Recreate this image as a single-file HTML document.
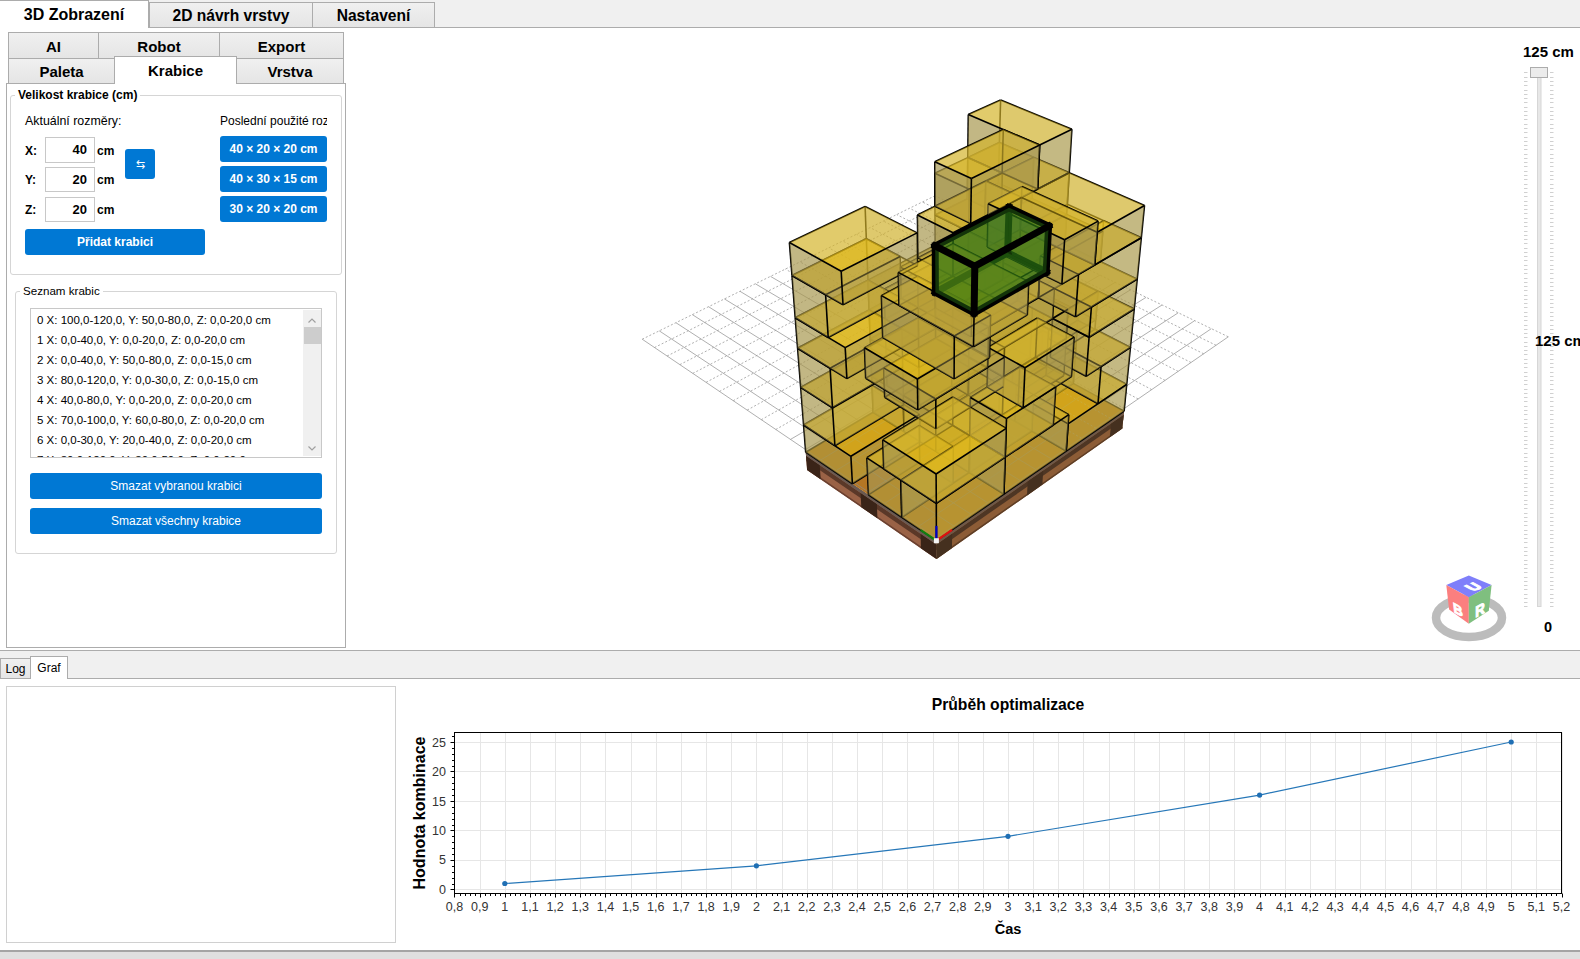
<!DOCTYPE html>
<html><head><meta charset="utf-8">
<style>
*{box-sizing:border-box;margin:0;padding:0}
html,body{width:1580px;height:959px;overflow:hidden;background:#fff;font-family:"Liberation Sans",sans-serif;color:#000}
.a{position:absolute}
.tab{position:absolute;border:1px solid #acacac;background:linear-gradient(#f0f0f0,#e5e5e5);text-align:center;font-weight:bold}
.tsel{background:#fff;border-bottom:none}
.btn{position:absolute;background:#0078d4;color:#fff;border-radius:3px;text-align:center;font-size:12px}
.tb{position:absolute;border:1px solid #c8c8c8;background:#fff;text-align:right;font-size:13px;font-weight:bold;padding-right:7px}
.gb{position:absolute;border:1px solid #d5d5d5;border-radius:3px}
.gt{position:absolute;background:#fff;font-size:12px;padding:0 3px}
.lbl{position:absolute;font-size:12px;white-space:nowrap}
.li{position:absolute;left:37px;font-size:11.5px;white-space:nowrap}
</style></head><body>
<!-- top tab strip -->
<div class="a" style="left:0;top:0;width:1580px;height:28px;background:#f0f0f0;border-bottom:1px solid #acacac"></div>
<div class="tab tsel" style="left:-1px;top:0;width:150px;height:28px;font-size:16px;line-height:28px">3D Zobrazení</div>
<div class="tab" style="left:149px;top:2px;width:164px;height:26px;font-size:15.6px;line-height:25px">2D návrh vrstvy</div>
<div class="tab" style="left:312px;top:2px;width:123px;height:26px;font-size:15.6px;line-height:25px">Nastavení</div>

<!-- left panel -->
<div class="a" style="left:6px;top:83px;width:340px;height:565px;border:1px solid #acacac;background:#fff"></div>
<div class="tab" style="left:8px;top:32px;width:91px;height:27px;font-size:15px;line-height:27px">AI</div>
<div class="tab" style="left:98px;top:32px;width:122px;height:27px;font-size:15px;line-height:27px">Robot</div>
<div class="tab" style="left:219px;top:32px;width:125px;height:27px;font-size:15px;line-height:27px">Export</div>
<div class="tab" style="left:8px;top:58px;width:107px;height:26px;font-size:15px;line-height:26px">Paleta</div>
<div class="tab" style="left:236px;top:58px;width:108px;height:26px;font-size:15px;line-height:26px">Vrstva</div>
<div class="tab tsel" style="left:114px;top:56px;width:123px;height:28px;font-size:15px;line-height:28px">Krabice</div>

<div class="gb" style="left:10px;top:95px;width:332px;height:180px"></div>
<div class="gt" style="left:15px;top:88px;font-weight:bold">Velikost krabice (cm)</div>
<div class="lbl" style="left:25px;top:114px;font-size:12.4px">Aktuální rozměry:</div>
<div class="lbl" style="left:220px;top:114px;width:107px;overflow:hidden">Poslední použité rozměry</div>
<div class="lbl" style="left:25px;top:144px;font-weight:bold">X:</div>
<div class="lbl" style="left:25px;top:173px;font-weight:bold">Y:</div>
<div class="lbl" style="left:25px;top:203px;font-weight:bold">Z:</div>
<div class="tb" style="left:45px;top:137px;width:50px;height:26px;line-height:24px">40</div>
<div class="tb" style="left:45px;top:167px;width:50px;height:25px;line-height:23px">20</div>
<div class="tb" style="left:45px;top:197px;width:50px;height:25px;line-height:23px">20</div>
<div class="lbl" style="left:97px;top:144px;font-weight:bold">cm</div>
<div class="lbl" style="left:97px;top:173px;font-weight:bold">cm</div>
<div class="lbl" style="left:97px;top:203px;font-weight:bold">cm</div>
<div class="btn" style="left:125px;top:149px;width:30px;height:30px;line-height:30px;font-size:11px">⇆</div>
<div class="btn" style="left:220px;top:136px;width:107px;height:26px;line-height:26px;font-weight:bold;overflow:hidden">40 × 20 × 20 cm</div>
<div class="btn" style="left:220px;top:166px;width:107px;height:26px;line-height:26px;font-weight:bold;overflow:hidden">40 × 30 × 15 cm</div>
<div class="btn" style="left:220px;top:196px;width:107px;height:26px;line-height:26px;font-weight:bold;overflow:hidden">30 × 20 × 20 cm</div>
<div class="btn" style="left:25px;top:229px;width:180px;height:26px;line-height:26px;font-weight:bold">Přidat krabici</div>

<div class="gb" style="left:15px;top:291px;width:322px;height:263px"></div>
<div class="gt" style="left:20px;top:284px;font-size:11.6px">Seznam krabic</div>
<div class="a" style="left:30px;top:308px;width:292px;height:150px;border:1px solid #c8c8c8;overflow:hidden">
  <div class="li" style="left:6px;top:5px">0 X: 100,0-120,0, Y: 50,0-80,0, Z: 0,0-20,0 cm</div>
  <div class="li" style="left:6px;top:25px">1 X: 0,0-40,0, Y: 0,0-20,0, Z: 0,0-20,0 cm</div>
  <div class="li" style="left:6px;top:45px">2 X: 0,0-40,0, Y: 50,0-80,0, Z: 0,0-15,0 cm</div>
  <div class="li" style="left:6px;top:65px">3 X: 80,0-120,0, Y: 0,0-30,0, Z: 0,0-15,0 cm</div>
  <div class="li" style="left:6px;top:85px">4 X: 40,0-80,0, Y: 0,0-20,0, Z: 0,0-20,0 cm</div>
  <div class="li" style="left:6px;top:105px">5 X: 70,0-100,0, Y: 60,0-80,0, Z: 0,0-20,0 cm</div>
  <div class="li" style="left:6px;top:125px">6 X: 0,0-30,0, Y: 20,0-40,0, Z: 0,0-20,0 cm</div>
  <div class="li" style="left:6px;top:145px">7 X: 80,0-120,0, Y: 30,0-50,0, Z: 0,0-20,0 cm</div>
  <div class="a" style="left:272px;top:1px;width:18px;height:146px;background:#f0f0f0"></div>
  <div class="a" style="left:273px;top:18px;width:17px;height:17px;background:#cdcdcd"></div>
  <svg class="a" style="left:272px;top:1px" width="18" height="147"><path d="M5.5 12.5l3.5-3.5 3.5 3.5M5.5 136.5l3.5 3.5 3.5-3.5" fill="none" stroke="#a0a0a0" stroke-width="1.2"/></svg>
</div>
<div class="btn" style="left:30px;top:473px;width:292px;height:26px;line-height:26px">Smazat vybranou krabici</div>
<div class="btn" style="left:30px;top:508px;width:292px;height:26px;line-height:26px">Smazat všechny krabice</div>

<!-- 3D view placeholder -->
<svg class="a" style="left:0;top:0" width="1580" height="959">
<polygon points="936.5,558.9 807.1,469.9 805.7,452.2 936.4,540.7" fill="#9a6246"/>
<polygon points="936.5,549.9 806.4,461.1 806.0,455.8 936.4,544.4" fill="#5a3828"/>
<polygon points="936.5,558.9 807.1,469.9 807.0,468.1 936.5,557.1" fill="#6a4030"/>
<polygon points="936.5,558.9 1122.3,428.6 1124.1,411.1 936.4,540.7" fill="#8c5c36"/>
<polygon points="936.5,549.9 1123.2,419.9 1123.7,414.7 936.4,544.4" fill="#4e3624"/>
<polygon points="936.5,558.9 1122.3,428.6 1122.5,426.8 936.5,557.1" fill="#5e3e26"/>
<polygon points="936.5,558.9 920.9,548.2 920.7,533.7 936.4,544.4" fill="#3a2418"/>
<polygon points="877.4,518.3 861.3,507.2 860.6,492.9 876.9,503.9" fill="#3a2418"/>
<polygon points="820.7,479.2 807.1,469.9 806.0,455.8 819.7,465.1" fill="#3a2418"/>
<polygon points="936.5,558.9 952.0,548.0 952.1,533.6 936.4,544.4" fill="#45301f"/>
<polygon points="1027.0,495.4 1042.4,484.6 1043.2,470.4 1027.7,481.2" fill="#45301f"/>
<polygon points="1109.8,437.3 1122.3,428.6 1123.7,414.7 1111.1,423.4" fill="#45301f"/>
<polygon points="936.4,544.4 806.0,455.8 805.7,452.2 936.4,540.7" fill="#6a5a52"/>
<polygon points="936.4,544.4 1123.7,414.7 1124.1,411.1 936.4,540.7" fill="#6e5848"/>
<polygon points="936.4,540.7 1124.1,411.1 994.1,340.3 805.7,452.2" fill="#b47624"/>
<path d="M936.4 538.0L642.2 339.2M936.4 538.0L1228.3 336.8M953.8 526.0L659.2 330.8M918.9 526.2L1211.3 328.7M970.9 514.2L675.9 322.7M901.7 514.6L1194.6 320.7M987.6 502.7L692.3 314.6M884.9 503.2L1178.2 312.8M1004.0 491.4L708.5 306.7M868.4 492.0L1162.0 305.0M1020.0 480.4L724.4 298.9M852.2 481.1L1146.1 297.3M1035.8 469.5L740.0 291.3M836.4 470.4L1130.5 289.8M1051.3 458.8L755.4 283.8M820.8 459.9L1115.1 282.4M1066.4 448.4L770.5 276.4M805.5 449.5L1099.9 275.1M790.5 439.4L1085.0 268.0" stroke="#8c8c8c" stroke-width="0.7" fill="none"/>
<path d="M1081.3 438.1L785.4 269.1M1095.9 428.1L800.1 261.9M775.8 429.5L1070.3 260.9M1110.3 418.2L814.5 254.8M761.3 419.7L1055.9 253.9M1124.3 408.5L828.8 247.9M747.2 410.1L1041.6 247.1M1138.2 399.0L842.8 241.0M733.2 400.7L1027.6 240.3M1151.7 389.6L856.5 234.3M719.5 391.4L1013.8 233.7M1165.1 380.4L870.1 227.6M706.1 382.3L1000.2 227.2M1178.2 371.4L883.5 221.1M692.8 373.4L986.7 220.7M1191.0 362.5L896.7 214.6M679.9 364.6L973.5 214.4M1203.7 353.8L909.6 208.3M667.1 356.0L960.5 208.1M1216.1 345.3L922.4 202.0M654.5 347.5L947.7 201.9M1228.3 336.8L935.0 195.8M642.2 339.2L935.0 195.8" stroke="#9a9a9a" stroke-width="0.8" stroke-dasharray="2 2" fill="none"/>
<line x1="994.1" y1="340.3" x2="995.1" y2="305.6" stroke="#000" stroke-width="1.6"/>
<line x1="965.4" y1="357.4" x2="994.1" y2="340.3" stroke="#000" stroke-width="1.6"/>
<line x1="1040.8" y1="365.7" x2="994.1" y2="340.3" stroke="#000" stroke-width="1.6"/>
<polygon points="965.4,357.4 994.1,340.3 995.1,305.6 965.9,322.4" fill="#b09e4c" fill-opacity="0.45"/>
<polygon points="1040.8,365.7 994.1,340.3 995.1,305.6 1042.6,330.6" fill="#a39552" fill-opacity="0.45"/>
<polygon points="1012.2,383.7 1040.8,365.7 994.1,340.3 965.4,357.4" fill="#c9a514" fill-opacity="0.45"/>
<line x1="1010.6" y1="313.8" x2="995.1" y2="305.6" stroke="#000" stroke-width="1.6"/>
<line x1="995.1" y1="305.6" x2="996.0" y2="269.6" stroke="#000" stroke-width="1.6"/>
<line x1="965.9" y1="322.4" x2="995.1" y2="305.6" stroke="#000" stroke-width="1.6"/>
<line x1="996.3" y1="374.8" x2="965.4" y2="357.4" stroke="#000" stroke-width="1.6"/>
<line x1="965.4" y1="357.4" x2="965.9" y2="322.4" stroke="#000" stroke-width="1.6"/>
<line x1="965.4" y1="357.4" x2="965.9" y2="322.4" stroke="#000" stroke-width="1.6"/>
<polygon points="1010.6,313.8 995.1,305.6 996.0,269.6 1011.9,277.6" fill="#a39552" fill-opacity="0.45"/>
<line x1="1042.6" y1="330.6" x2="995.1" y2="305.6" stroke="#000" stroke-width="1.6"/>
<line x1="1012.2" y1="383.7" x2="965.4" y2="357.4" stroke="#000" stroke-width="1.6"/>
<line x1="920.5" y1="384.1" x2="965.4" y2="357.4" stroke="#000" stroke-width="1.6"/>
<line x1="1073.2" y1="383.4" x2="1040.8" y2="365.7" stroke="#000" stroke-width="1.6"/>
<line x1="1040.8" y1="365.7" x2="1042.6" y2="330.6" stroke="#000" stroke-width="1.6"/>
<line x1="1040.8" y1="365.7" x2="1042.6" y2="330.6" stroke="#000" stroke-width="1.6"/>
<line x1="1042.6" y1="330.6" x2="1010.6" y2="313.8" stroke="#000" stroke-width="1.6"/>
<line x1="1010.6" y1="313.8" x2="1011.9" y2="277.6" stroke="#000" stroke-width="1.6"/>
<line x1="1010.6" y1="313.8" x2="1011.9" y2="277.6" stroke="#000" stroke-width="1.6"/>
<line x1="1012.2" y1="383.7" x2="1040.8" y2="365.7" stroke="#000" stroke-width="1.6"/>
<polygon points="996.3,374.8 965.4,357.4 965.9,322.4 997.3,339.5" fill="#a39552" fill-opacity="0.45"/>
<line x1="935.6" y1="339.7" x2="995.1" y2="305.6" stroke="#000" stroke-width="1.6"/>
<line x1="1011.9" y1="277.6" x2="996.0" y2="269.6" stroke="#000" stroke-width="1.6"/>
<line x1="1011.9" y1="277.6" x2="996.0" y2="269.6" stroke="#000" stroke-width="1.6"/>
<polygon points="1013.5,348.2 1042.6,330.6 995.1,305.6 965.9,322.4" fill="#e8c21a" fill-opacity="0.45"/>
<polygon points="1012.2,383.7 965.4,357.4 965.9,322.4 1013.5,348.2" fill="#a39552" fill-opacity="0.45"/>
<polygon points="951.2,348.5 1010.6,313.8 995.1,305.6 935.6,339.7" fill="#c9a514" fill-opacity="0.45"/>
<line x1="1012.2" y1="383.7" x2="996.3" y2="374.8" stroke="#000" stroke-width="1.6"/>
<line x1="996.0" y1="269.6" x2="996.8" y2="241.7" stroke="#000" stroke-width="1.6"/>
<polygon points="951.4,402.4 996.3,374.8 965.4,357.4 920.5,384.1" fill="#c9a514" fill-opacity="0.45"/>
<polygon points="920.5,384.1 965.4,357.4 965.9,322.4 920.1,348.6" fill="#b09e4c" fill-opacity="0.45"/>
<polygon points="1073.2,383.4 1040.8,365.7 1042.6,330.6 1075.7,348.0" fill="#a39552" fill-opacity="0.45"/>
<polygon points="1042.6,330.6 1010.6,313.8 1011.9,277.6 1044.5,294.1" fill="#a39552" fill-opacity="0.45"/>
<polygon points="1012.2,383.7 1040.8,365.7 1042.6,330.6 1013.5,348.2" fill="#b09e4c" fill-opacity="0.45"/>
<polygon points="1011.9,277.6 996.0,269.6 996.8,241.7 1012.9,249.5" fill="#a39552" fill-opacity="0.45"/>
<polygon points="935.6,339.7 995.1,305.6 996.0,269.6 935.4,303.0" fill="#b09e4c" fill-opacity="0.45"/>
<line x1="982.5" y1="402.3" x2="1040.8" y2="365.7" stroke="#000" stroke-width="1.6"/>
<line x1="996.3" y1="374.8" x2="997.3" y2="339.5" stroke="#000" stroke-width="1.6"/>
<line x1="996.3" y1="374.8" x2="997.3" y2="339.5" stroke="#000" stroke-width="1.6"/>
<line x1="966.6" y1="393.0" x2="996.3" y2="374.8" stroke="#000" stroke-width="1.6"/>
<line x1="997.3" y1="339.5" x2="965.9" y2="322.4" stroke="#000" stroke-width="1.6"/>
<line x1="951.2" y1="348.5" x2="1010.6" y2="313.8" stroke="#000" stroke-width="1.6"/>
<line x1="951.2" y1="348.5" x2="1010.6" y2="313.8" stroke="#000" stroke-width="1.6"/>
<line x1="1073.2" y1="383.4" x2="1075.1" y2="357.0" stroke="#000" stroke-width="1.6"/>
<polygon points="1012.2,383.7 996.3,374.8 997.3,339.5 1013.5,348.2" fill="#a39552" fill-opacity="0.45"/>
<polygon points="982.5,402.3 1012.2,383.7 996.3,374.8 966.6,393.0" fill="#c9a514" fill-opacity="0.45"/>
<line x1="1011.9" y1="277.6" x2="1012.9" y2="249.5" stroke="#000" stroke-width="1.6"/>
<line x1="1011.9" y1="277.6" x2="1012.9" y2="249.5" stroke="#000" stroke-width="1.6"/>
<line x1="1013.5" y1="348.2" x2="965.9" y2="322.4" stroke="#000" stroke-width="1.6"/>
<line x1="951.4" y1="402.4" x2="996.3" y2="374.8" stroke="#000" stroke-width="1.6"/>
<line x1="1073.2" y1="383.4" x2="1075.7" y2="348.0" stroke="#000" stroke-width="1.6"/>
<line x1="920.1" y1="348.6" x2="965.9" y2="322.4" stroke="#000" stroke-width="1.6"/>
<line x1="1012.9" y1="249.5" x2="996.8" y2="241.7" stroke="#000" stroke-width="1.6"/>
<line x1="1012.9" y1="249.5" x2="996.8" y2="241.7" stroke="#000" stroke-width="1.6"/>
<line x1="1075.7" y1="348.0" x2="1042.6" y2="330.6" stroke="#000" stroke-width="1.6"/>
<line x1="1075.7" y1="348.0" x2="1042.6" y2="330.6" stroke="#000" stroke-width="1.6"/>
<line x1="1042.6" y1="330.6" x2="1044.5" y2="294.1" stroke="#000" stroke-width="1.6"/>
<line x1="1042.6" y1="330.6" x2="1044.5" y2="294.1" stroke="#000" stroke-width="1.6"/>
<line x1="1044.5" y1="294.1" x2="1011.9" y2="277.6" stroke="#000" stroke-width="1.6"/>
<line x1="1044.5" y1="294.1" x2="1011.9" y2="277.6" stroke="#000" stroke-width="1.6"/>
<polygon points="1015.1,421.3 1073.2,383.4 1040.8,365.7 982.5,402.3" fill="#c9a514" fill-opacity="0.45"/>
<line x1="996.8" y1="241.7" x2="997.5" y2="212.9" stroke="#000" stroke-width="1.6"/>
<line x1="1124.1" y1="411.1" x2="1073.2" y2="383.4" stroke="#000" stroke-width="1.6"/>
<polygon points="982.5,402.3 1040.8,365.7 1042.6,330.6 983.3,366.5" fill="#b09e4c" fill-opacity="0.45"/>
<line x1="1013.5" y1="348.2" x2="1042.6" y2="330.6" stroke="#000" stroke-width="1.6"/>
<line x1="1013.5" y1="348.2" x2="1042.6" y2="330.6" stroke="#000" stroke-width="1.6"/>
<polygon points="983.3,366.5 1042.6,330.6 1010.6,313.8 951.2,348.5" fill="#c9a514" fill-opacity="0.45"/>
<polygon points="951.2,348.5 1010.6,313.8 1011.9,277.6 951.4,311.6" fill="#b09e4c" fill-opacity="0.45"/>
<polygon points="951.2,348.5 1010.6,313.8 1011.9,277.6 951.4,311.6" fill="#b09e4c" fill-opacity="0.45"/>
<line x1="1012.2" y1="383.7" x2="1013.5" y2="348.2" stroke="#000" stroke-width="1.6"/>
<line x1="1012.2" y1="383.7" x2="1013.5" y2="348.2" stroke="#000" stroke-width="1.6"/>
<line x1="935.4" y1="303.0" x2="996.0" y2="269.6" stroke="#000" stroke-width="1.6"/>
<line x1="935.4" y1="303.0" x2="996.0" y2="269.6" stroke="#000" stroke-width="1.6"/>
<polygon points="966.6,393.0 996.3,374.8 997.3,339.5 967.1,357.4" fill="#b09e4c" fill-opacity="0.45"/>
<line x1="982.5" y1="402.3" x2="1012.2" y2="383.7" stroke="#000" stroke-width="1.6"/>
<line x1="951.4" y1="402.4" x2="920.5" y2="384.1" stroke="#000" stroke-width="1.6"/>
<line x1="951.4" y1="402.4" x2="920.5" y2="384.1" stroke="#000" stroke-width="1.6"/>
<line x1="920.5" y1="384.1" x2="920.1" y2="348.6" stroke="#000" stroke-width="1.6"/>
<line x1="920.5" y1="384.1" x2="920.1" y2="348.6" stroke="#000" stroke-width="1.6"/>
<polygon points="1012.9,249.5 996.8,241.7 997.5,212.9 1013.9,220.7" fill="#a39552" fill-opacity="0.45"/>
<polygon points="1044.5,294.1 1011.9,277.6 1012.9,249.5 1046.0,265.8" fill="#a39552" fill-opacity="0.45"/>
<polygon points="951.4,311.6 1011.9,277.6 996.0,269.6 935.4,303.0" fill="#e8c21a" fill-opacity="0.45"/>
<polygon points="951.4,311.6 1011.9,277.6 996.0,269.6 935.4,303.0" fill="#c9a514" fill-opacity="0.45"/>
<line x1="1013.5" y1="348.2" x2="997.3" y2="339.5" stroke="#000" stroke-width="1.6"/>
<polygon points="951.4,402.4 996.3,374.8 997.3,339.5 951.6,366.7" fill="#b09e4c" fill-opacity="0.45"/>
<polygon points="1124.1,411.1 1073.2,383.4 1075.1,357.0 1126.7,384.4" fill="#a39552" fill-opacity="0.45"/>
<polygon points="951.6,366.7 997.3,339.5 965.9,322.4 920.1,348.6" fill="#e8c21a" fill-opacity="0.45"/>
<line x1="873.1" y1="412.2" x2="920.5" y2="384.1" stroke="#000" stroke-width="1.6"/>
<line x1="982.5" y1="402.3" x2="966.6" y2="393.0" stroke="#000" stroke-width="1.6"/>
<polygon points="935.4,303.0 996.0,269.6 996.8,241.7 935.3,274.5" fill="#b09e4c" fill-opacity="0.45"/>
<polygon points="1075.7,348.0 1042.6,330.6 1044.5,294.1 1078.3,311.1" fill="#a39552" fill-opacity="0.45"/>
<line x1="951.2" y1="348.5" x2="935.6" y2="339.7" stroke="#000" stroke-width="1.6"/>
<line x1="951.2" y1="348.5" x2="935.6" y2="339.7" stroke="#000" stroke-width="1.6"/>
<polygon points="1046.7,366.3 1075.7,348.0 1042.6,330.6 1013.5,348.2" fill="#c9a514" fill-opacity="0.45"/>
<line x1="1015.1" y1="421.3" x2="1073.2" y2="383.4" stroke="#000" stroke-width="1.6"/>
<line x1="1015.1" y1="421.3" x2="1073.2" y2="383.4" stroke="#000" stroke-width="1.6"/>
<polygon points="1013.5,348.2 1042.6,330.6 1044.5,294.1 1014.8,311.4" fill="#b09e4c" fill-opacity="0.45"/>
<line x1="1012.9" y1="249.5" x2="1013.9" y2="220.7" stroke="#000" stroke-width="1.6"/>
<line x1="1012.9" y1="249.5" x2="1013.9" y2="220.7" stroke="#000" stroke-width="1.6"/>
<polygon points="982.5,402.3 1012.2,383.7 1013.5,348.2 983.3,366.5" fill="#b09e4c" fill-opacity="0.45"/>
<line x1="1013.9" y1="220.7" x2="997.5" y2="212.9" stroke="#000" stroke-width="1.6"/>
<line x1="983.3" y1="366.5" x2="1042.6" y2="330.6" stroke="#000" stroke-width="1.6"/>
<line x1="983.3" y1="366.5" x2="1042.6" y2="330.6" stroke="#000" stroke-width="1.6"/>
<line x1="951.4" y1="311.6" x2="1011.9" y2="277.6" stroke="#000" stroke-width="1.6"/>
<line x1="951.4" y1="311.6" x2="1011.9" y2="277.6" stroke="#000" stroke-width="1.6"/>
<line x1="951.4" y1="311.6" x2="1011.9" y2="277.6" stroke="#000" stroke-width="1.6"/>
<line x1="951.4" y1="311.6" x2="1011.9" y2="277.6" stroke="#000" stroke-width="1.6"/>
<line x1="998.7" y1="411.7" x2="966.6" y2="393.0" stroke="#000" stroke-width="1.6"/>
<polygon points="951.4,402.4 920.5,384.1 920.1,348.6 951.6,366.7" fill="#a39552" fill-opacity="0.45"/>
<polygon points="951.4,402.4 920.5,384.1 920.1,348.6 951.6,366.7" fill="#a39552" fill-opacity="0.45"/>
<line x1="1075.1" y1="357.0" x2="1077.6" y2="320.5" stroke="#000" stroke-width="1.6"/>
<line x1="967.1" y1="357.4" x2="997.3" y2="339.5" stroke="#000" stroke-width="1.6"/>
<line x1="997.5" y1="212.9" x2="998.3" y2="183.3" stroke="#000" stroke-width="1.6"/>
<line x1="966.6" y1="393.0" x2="967.1" y2="357.4" stroke="#000" stroke-width="1.6"/>
<line x1="966.6" y1="393.0" x2="967.1" y2="357.4" stroke="#000" stroke-width="1.6"/>
<line x1="935.6" y1="339.7" x2="935.4" y2="303.0" stroke="#000" stroke-width="1.6"/>
<line x1="935.6" y1="339.7" x2="935.4" y2="303.0" stroke="#000" stroke-width="1.6"/>
<line x1="1046.0" y1="265.8" x2="1012.9" y2="249.5" stroke="#000" stroke-width="1.6"/>
<line x1="1046.0" y1="265.8" x2="1012.9" y2="249.5" stroke="#000" stroke-width="1.6"/>
<line x1="1046.2" y1="375.3" x2="1075.1" y2="357.0" stroke="#000" stroke-width="1.6"/>
<line x1="935.3" y1="274.5" x2="996.8" y2="241.7" stroke="#000" stroke-width="1.6"/>
<line x1="935.3" y1="274.5" x2="996.8" y2="241.7" stroke="#000" stroke-width="1.6"/>
<line x1="1126.7" y1="384.4" x2="1075.1" y2="357.0" stroke="#000" stroke-width="1.6"/>
<line x1="1126.7" y1="384.4" x2="1075.1" y2="357.0" stroke="#000" stroke-width="1.6"/>
<line x1="1044.5" y1="294.1" x2="1046.0" y2="265.8" stroke="#000" stroke-width="1.6"/>
<line x1="1044.5" y1="294.1" x2="1046.0" y2="265.8" stroke="#000" stroke-width="1.6"/>
<line x1="1029.9" y1="357.2" x2="1013.5" y2="348.2" stroke="#000" stroke-width="1.6"/>
<polygon points="1015.1,421.3 1073.2,383.4 1075.1,357.0 1016.2,394.4" fill="#b09e4c" fill-opacity="0.45"/>
<line x1="1030.6" y1="228.5" x2="997.5" y2="212.9" stroke="#000" stroke-width="1.6"/>
<polygon points="904.0,431.6 951.4,402.4 920.5,384.1 873.1,412.2" fill="#c9a514" fill-opacity="0.45"/>
<polygon points="983.3,366.5 1013.5,348.2 997.3,339.5 967.1,357.4" fill="#e8c21a" fill-opacity="0.45"/>
<polygon points="873.1,412.2 920.5,384.1 920.1,348.6 871.7,376.3" fill="#b09e4c" fill-opacity="0.45"/>
<polygon points="982.5,402.3 966.6,393.0 967.1,357.4 983.3,366.5" fill="#a39552" fill-opacity="0.45"/>
<polygon points="951.2,348.5 935.6,339.7 935.4,303.0 951.4,311.6" fill="#a39552" fill-opacity="0.45"/>
<polygon points="951.2,348.5 935.6,339.7 935.4,303.0 951.4,311.6" fill="#a39552" fill-opacity="0.45"/>
<line x1="1075.7" y1="348.0" x2="1078.3" y2="311.1" stroke="#000" stroke-width="1.6"/>
<polygon points="951.4,311.6 1011.9,277.6 1012.9,249.5 951.5,283.0" fill="#b09e4c" fill-opacity="0.45"/>
<polygon points="951.4,311.6 1011.9,277.6 1012.9,249.5 951.5,283.0" fill="#b09e4c" fill-opacity="0.45"/>
<line x1="951.6" y1="366.7" x2="997.3" y2="339.5" stroke="#000" stroke-width="1.6"/>
<line x1="1078.3" y1="311.1" x2="1044.5" y2="294.1" stroke="#000" stroke-width="1.6"/>
<polygon points="1015.1,421.3 1073.2,383.4 1075.7,348.0 1016.5,385.2" fill="#b09e4c" fill-opacity="0.45"/>
<line x1="1046.7" y1="366.3" x2="1075.7" y2="348.0" stroke="#000" stroke-width="1.6"/>
<polygon points="1046.0,265.8 1012.9,249.5 1013.9,220.7 1047.5,236.6" fill="#a39552" fill-opacity="0.45"/>
<polygon points="951.5,283.0 1012.9,249.5 996.8,241.7 935.3,274.5" fill="#e8c21a" fill-opacity="0.45"/>
<polygon points="951.5,283.0 1012.9,249.5 996.8,241.7 935.3,274.5" fill="#c9a514" fill-opacity="0.45"/>
<polygon points="1016.5,385.2 1075.7,348.0 1042.6,330.6 983.3,366.5" fill="#e8c21a" fill-opacity="0.45"/>
<line x1="1014.8" y1="311.4" x2="1044.5" y2="294.1" stroke="#000" stroke-width="1.6"/>
<line x1="1014.8" y1="311.4" x2="1044.5" y2="294.1" stroke="#000" stroke-width="1.6"/>
<line x1="1124.1" y1="411.1" x2="1126.7" y2="384.4" stroke="#000" stroke-width="1.6"/>
<polygon points="983.3,366.5 1042.6,330.6 1044.5,294.1 984.1,329.4" fill="#b09e4c" fill-opacity="0.45"/>
<polygon points="984.1,329.4 1044.5,294.1 1011.9,277.6 951.4,311.6" fill="#e8c21a" fill-opacity="0.45"/>
<polygon points="984.1,329.4 1044.5,294.1 1011.9,277.6 951.4,311.6" fill="#c9a514" fill-opacity="0.45"/>
<line x1="1046.7" y1="366.3" x2="1013.5" y2="348.2" stroke="#000" stroke-width="1.6"/>
<polygon points="935.3,274.5 996.8,241.7 997.5,212.9 935.2,245.2" fill="#b09e4c" fill-opacity="0.45"/>
<line x1="1015.1" y1="421.3" x2="982.5" y2="402.3" stroke="#000" stroke-width="1.6"/>
<line x1="1013.5" y1="348.2" x2="1014.8" y2="311.4" stroke="#000" stroke-width="1.6"/>
<line x1="1013.5" y1="348.2" x2="1014.8" y2="311.4" stroke="#000" stroke-width="1.6"/>
<polygon points="1066.2,451.1 1124.1,411.1 1073.2,383.4 1015.1,421.3" fill="#c9a514" fill-opacity="0.45"/>
<polygon points="998.7,411.7 966.6,393.0 967.1,357.4 999.7,375.8" fill="#a39552" fill-opacity="0.45"/>
<polygon points="1030.6,228.5 997.5,212.9 998.3,183.3 1031.9,198.7" fill="#a39552" fill-opacity="0.45"/>
<line x1="983.3" y1="366.5" x2="1013.5" y2="348.2" stroke="#000" stroke-width="1.6"/>
<line x1="904.0" y1="431.6" x2="966.6" y2="393.0" stroke="#000" stroke-width="1.6"/>
<line x1="982.5" y1="402.3" x2="983.3" y2="366.5" stroke="#000" stroke-width="1.6"/>
<line x1="982.5" y1="402.3" x2="983.3" y2="366.5" stroke="#000" stroke-width="1.6"/>
<line x1="1095.7" y1="319.9" x2="1044.5" y2="294.1" stroke="#000" stroke-width="1.6"/>
<polygon points="1046.2,375.3 1075.1,357.0 1077.6,320.5 1048.2,338.5" fill="#b09e4c" fill-opacity="0.45"/>
<line x1="951.4" y1="402.4" x2="951.6" y2="366.7" stroke="#000" stroke-width="1.6"/>
<line x1="951.4" y1="402.4" x2="951.6" y2="366.7" stroke="#000" stroke-width="1.6"/>
<line x1="871.7" y1="376.3" x2="935.6" y2="339.7" stroke="#000" stroke-width="1.6"/>
<line x1="983.3" y1="366.5" x2="951.2" y2="348.5" stroke="#000" stroke-width="1.6"/>
<line x1="983.3" y1="366.5" x2="951.2" y2="348.5" stroke="#000" stroke-width="1.6"/>
<line x1="951.2" y1="348.5" x2="951.4" y2="311.6" stroke="#000" stroke-width="1.6"/>
<line x1="951.2" y1="348.5" x2="951.4" y2="311.6" stroke="#000" stroke-width="1.6"/>
<line x1="951.2" y1="348.5" x2="951.4" y2="311.6" stroke="#000" stroke-width="1.6"/>
<line x1="951.2" y1="348.5" x2="951.4" y2="311.6" stroke="#000" stroke-width="1.6"/>
<line x1="951.6" y1="366.7" x2="920.1" y2="348.6" stroke="#000" stroke-width="1.6"/>
<line x1="951.6" y1="366.7" x2="920.1" y2="348.6" stroke="#000" stroke-width="1.6"/>
<polygon points="1126.7,384.4 1075.1,357.0 1077.6,320.5 1130.4,347.4" fill="#a39552" fill-opacity="0.45"/>
<line x1="1016.2" y1="394.4" x2="1075.1" y2="357.0" stroke="#000" stroke-width="1.6"/>
<polygon points="1029.9,357.2 1013.5,348.2 1014.8,311.4 1031.6,320.2" fill="#a39552" fill-opacity="0.45"/>
<line x1="951.5" y1="283.0" x2="1012.9" y2="249.5" stroke="#000" stroke-width="1.6"/>
<line x1="951.5" y1="283.0" x2="1012.9" y2="249.5" stroke="#000" stroke-width="1.6"/>
<line x1="951.5" y1="283.0" x2="1012.9" y2="249.5" stroke="#000" stroke-width="1.6"/>
<line x1="951.5" y1="283.0" x2="1012.9" y2="249.5" stroke="#000" stroke-width="1.6"/>
<polygon points="1098.0,403.8 1126.7,384.4 1075.1,357.0 1046.2,375.3" fill="#c9a514" fill-opacity="0.45"/>
<polygon points="1014.8,311.4 1044.5,294.1 1046.0,265.8 1015.9,282.8" fill="#b09e4c" fill-opacity="0.45"/>
<line x1="1047.5" y1="236.6" x2="1013.9" y2="220.7" stroke="#000" stroke-width="1.6"/>
<line x1="998.3" y1="183.3" x2="999.4" y2="142.5" stroke="#000" stroke-width="1.6"/>
<line x1="904.0" y1="431.6" x2="951.4" y2="402.4" stroke="#000" stroke-width="1.6"/>
<polygon points="887.3,385.8 951.2,348.5 935.6,339.7 871.7,376.3" fill="#c9a514" fill-opacity="0.45"/>
<line x1="1063.0" y1="274.1" x2="1046.0" y2="265.8" stroke="#000" stroke-width="1.6"/>
<line x1="951.4" y1="311.6" x2="935.4" y2="303.0" stroke="#000" stroke-width="1.6"/>
<line x1="951.4" y1="311.6" x2="935.4" y2="303.0" stroke="#000" stroke-width="1.6"/>
<line x1="951.4" y1="311.6" x2="935.4" y2="303.0" stroke="#000" stroke-width="1.6"/>
<line x1="951.4" y1="311.6" x2="935.4" y2="303.0" stroke="#000" stroke-width="1.6"/>
<line x1="871.7" y1="376.3" x2="920.1" y2="348.6" stroke="#000" stroke-width="1.6"/>
<line x1="983.3" y1="366.5" x2="967.1" y2="357.4" stroke="#000" stroke-width="1.6"/>
<polygon points="1046.7,366.3 1075.7,348.0 1078.3,311.1 1048.7,329.1" fill="#b09e4c" fill-opacity="0.45"/>
<polygon points="1048.7,329.1 1078.3,311.1 1044.5,294.1 1014.8,311.4" fill="#e8c21a" fill-opacity="0.45"/>
<line x1="935.2" y1="245.2" x2="997.5" y2="212.9" stroke="#000" stroke-width="1.6"/>
<line x1="935.2" y1="245.2" x2="997.5" y2="212.9" stroke="#000" stroke-width="1.6"/>
<polygon points="1095.7,319.9 1044.5,294.1 1046.0,265.8 1098.0,291.2" fill="#a39552" fill-opacity="0.45"/>
<line x1="1031.9" y1="198.7" x2="998.3" y2="183.3" stroke="#000" stroke-width="1.6"/>
<line x1="1031.9" y1="198.7" x2="998.3" y2="183.3" stroke="#000" stroke-width="1.6"/>
<line x1="873.1" y1="412.2" x2="872.1" y2="385.4" stroke="#000" stroke-width="1.6"/>
<line x1="1046.0" y1="265.8" x2="1047.5" y2="236.6" stroke="#000" stroke-width="1.6"/>
<line x1="1046.0" y1="265.8" x2="1047.5" y2="236.6" stroke="#000" stroke-width="1.6"/>
<line x1="935.4" y1="303.0" x2="935.3" y2="274.5" stroke="#000" stroke-width="1.6"/>
<line x1="935.4" y1="303.0" x2="935.3" y2="274.5" stroke="#000" stroke-width="1.6"/>
<polygon points="1046.7,366.3 1013.5,348.2 1014.8,311.4 1048.7,329.1" fill="#a39552" fill-opacity="0.45"/>
<line x1="1016.5" y1="385.2" x2="1075.7" y2="348.0" stroke="#000" stroke-width="1.6"/>
<line x1="1063.7" y1="375.5" x2="1029.9" y2="357.2" stroke="#000" stroke-width="1.6"/>
<line x1="967.3" y1="198.9" x2="998.3" y2="183.3" stroke="#000" stroke-width="1.6"/>
<line x1="1031.8" y1="431.0" x2="998.7" y2="411.7" stroke="#000" stroke-width="1.6"/>
<line x1="1029.9" y1="357.2" x2="1031.6" y2="320.2" stroke="#000" stroke-width="1.6"/>
<line x1="1029.9" y1="357.2" x2="1031.6" y2="320.2" stroke="#000" stroke-width="1.6"/>
<polygon points="1015.1,421.3 982.5,402.3 983.3,366.5 1016.5,385.2" fill="#a39552" fill-opacity="0.45"/>
<line x1="984.1" y1="329.4" x2="1044.5" y2="294.1" stroke="#000" stroke-width="1.6"/>
<line x1="984.1" y1="329.4" x2="1044.5" y2="294.1" stroke="#000" stroke-width="1.6"/>
<polygon points="936.1,451.6 998.7,411.7 966.6,393.0 904.0,431.6" fill="#c9a514" fill-opacity="0.45"/>
<polygon points="951.5,283.0 1012.9,249.5 1013.9,220.7 951.6,253.6" fill="#b09e4c" fill-opacity="0.45"/>
<polygon points="951.5,283.0 1012.9,249.5 1013.9,220.7 951.6,253.6" fill="#b09e4c" fill-opacity="0.45"/>
<line x1="904.0" y1="431.6" x2="873.1" y2="412.2" stroke="#000" stroke-width="1.6"/>
<line x1="873.1" y1="412.2" x2="871.7" y2="376.3" stroke="#000" stroke-width="1.6"/>
<line x1="998.7" y1="411.7" x2="999.7" y2="375.8" stroke="#000" stroke-width="1.6"/>
<line x1="998.7" y1="411.7" x2="999.7" y2="375.8" stroke="#000" stroke-width="1.6"/>
<polygon points="904.0,431.6 966.6,393.0 967.1,357.4 903.2,395.4" fill="#b09e4c" fill-opacity="0.45"/>
<polygon points="871.7,376.3 935.6,339.7 935.4,303.0 870.3,339.0" fill="#b09e4c" fill-opacity="0.45"/>
<polygon points="983.3,366.5 951.2,348.5 951.4,311.6 984.1,329.4" fill="#a39552" fill-opacity="0.45"/>
<polygon points="983.3,366.5 951.2,348.5 951.4,311.6 984.1,329.4" fill="#a39552" fill-opacity="0.45"/>
<line x1="999.7" y1="375.8" x2="967.1" y2="357.4" stroke="#000" stroke-width="1.6"/>
<line x1="951.9" y1="385.5" x2="1013.5" y2="348.2" stroke="#000" stroke-width="1.6"/>
<line x1="1030.6" y1="228.5" x2="1031.9" y2="198.7" stroke="#000" stroke-width="1.6"/>
<line x1="1030.6" y1="228.5" x2="1031.9" y2="198.7" stroke="#000" stroke-width="1.6"/>
<polygon points="951.6,253.6 1013.9,220.7 997.5,212.9 935.2,245.2" fill="#e8c21a" fill-opacity="0.45"/>
<polygon points="1066.1,338.2 1095.7,319.9 1044.5,294.1 1014.8,311.4" fill="#c9a514" fill-opacity="0.45"/>
<polygon points="1063.0,274.1 1046.0,265.8 1047.5,236.6 1064.8,244.8" fill="#a39552" fill-opacity="0.45"/>
<line x1="887.3" y1="385.8" x2="951.2" y2="348.5" stroke="#000" stroke-width="1.6"/>
<line x1="887.3" y1="385.8" x2="951.2" y2="348.5" stroke="#000" stroke-width="1.6"/>
<line x1="1048.2" y1="338.5" x2="1077.6" y2="320.5" stroke="#000" stroke-width="1.6"/>
<polygon points="951.4,311.6 935.4,303.0 935.3,274.5 951.5,283.0" fill="#a39552" fill-opacity="0.45"/>
<polygon points="951.4,311.6 935.4,303.0 935.3,274.5 951.5,283.0" fill="#a39552" fill-opacity="0.45"/>
<line x1="1015.9" y1="282.8" x2="1046.0" y2="265.8" stroke="#000" stroke-width="1.6"/>
<polygon points="935.2,245.2 997.5,212.9 998.3,183.3 935.1,215.0" fill="#b09e4c" fill-opacity="0.45"/>
<polygon points="984.7,300.5 1046.0,265.8 1012.9,249.5 951.5,283.0" fill="#e8c21a" fill-opacity="0.45"/>
<polygon points="984.7,300.5 1046.0,265.8 1012.9,249.5 951.5,283.0" fill="#c9a514" fill-opacity="0.45"/>
<line x1="1066.2" y1="451.1" x2="1124.1" y2="411.1" stroke="#000" stroke-width="1.6"/>
<line x1="1046.2" y1="375.3" x2="1048.2" y2="338.5" stroke="#000" stroke-width="1.6"/>
<line x1="1130.4" y1="347.4" x2="1077.6" y2="320.5" stroke="#000" stroke-width="1.6"/>
<line x1="1031.6" y1="320.2" x2="1014.8" y2="311.4" stroke="#000" stroke-width="1.6"/>
<line x1="1031.6" y1="320.2" x2="1014.8" y2="311.4" stroke="#000" stroke-width="1.6"/>
<line x1="1064.8" y1="244.8" x2="1030.6" y2="228.5" stroke="#000" stroke-width="1.6"/>
<polygon points="1031.9,198.7 998.3,183.3 999.4,142.5 1033.7,157.4" fill="#a39552" fill-opacity="0.45"/>
<line x1="919.9" y1="441.5" x2="873.1" y2="412.2" stroke="#000" stroke-width="1.6"/>
<polygon points="968.4,395.1 1029.9,357.2 1013.5,348.2 951.9,385.5" fill="#c9a514" fill-opacity="0.45"/>
<line x1="1098.0" y1="291.2" x2="1046.0" y2="265.8" stroke="#000" stroke-width="1.6"/>
<polygon points="904.0,431.6 951.4,402.4 951.6,366.7 903.2,395.4" fill="#b09e4c" fill-opacity="0.45"/>
<polygon points="1068.1,423.9 1126.7,384.4 1075.1,357.0 1016.2,394.4" fill="#e8c21a" fill-opacity="0.45"/>
<polygon points="903.2,395.4 951.6,366.7 920.1,348.6 871.7,376.3" fill="#e8c21a" fill-opacity="0.45"/>
<polygon points="984.1,329.4 1044.5,294.1 1046.0,265.8 984.7,300.5" fill="#b09e4c" fill-opacity="0.45"/>
<polygon points="967.3,198.9 998.3,183.3 999.4,142.5 967.8,157.6" fill="#b09e4c" fill-opacity="0.45"/>
<polygon points="968.3,262.1 1030.6,228.5 997.5,212.9 935.2,245.2" fill="#c9a514" fill-opacity="0.45"/>
<line x1="1098.0" y1="403.8" x2="1046.2" y2="375.3" stroke="#000" stroke-width="1.6"/>
<line x1="1126.7" y1="384.4" x2="1130.4" y2="347.4" stroke="#000" stroke-width="1.6"/>
<line x1="1014.8" y1="311.4" x2="1015.9" y2="282.8" stroke="#000" stroke-width="1.6"/>
<line x1="1014.8" y1="311.4" x2="1015.9" y2="282.8" stroke="#000" stroke-width="1.6"/>
<line x1="1015.1" y1="421.3" x2="1016.2" y2="394.4" stroke="#000" stroke-width="1.6"/>
<line x1="1048.7" y1="329.1" x2="1078.3" y2="311.1" stroke="#000" stroke-width="1.6"/>
<line x1="1063.0" y1="274.1" x2="1064.8" y2="244.8" stroke="#000" stroke-width="1.6"/>
<line x1="1063.0" y1="274.1" x2="1064.8" y2="244.8" stroke="#000" stroke-width="1.6"/>
<line x1="951.6" y1="253.6" x2="1013.9" y2="220.7" stroke="#000" stroke-width="1.6"/>
<line x1="951.6" y1="253.6" x2="1013.9" y2="220.7" stroke="#000" stroke-width="1.6"/>
<polygon points="1063.7,375.5 1029.9,357.2 1031.6,320.2 1066.1,338.2" fill="#a39552" fill-opacity="0.45"/>
<line x1="805.7" y1="452.2" x2="873.1" y2="412.2" stroke="#000" stroke-width="1.6"/>
<line x1="1098.0" y1="403.8" x2="1126.7" y2="384.4" stroke="#000" stroke-width="1.6"/>
<line x1="1000.4" y1="291.6" x2="1046.0" y2="265.8" stroke="#000" stroke-width="1.6"/>
<polygon points="1000.9,214.8 1031.9,198.7 998.3,183.3 967.3,198.9" fill="#c9a514" fill-opacity="0.45"/>
<line x1="1130.4" y1="347.4" x2="1094.9" y2="329.3" stroke="#000" stroke-width="1.6"/>
<line x1="951.4" y1="311.6" x2="951.5" y2="283.0" stroke="#000" stroke-width="1.6"/>
<line x1="951.4" y1="311.6" x2="951.5" y2="283.0" stroke="#000" stroke-width="1.6"/>
<line x1="951.4" y1="311.6" x2="951.5" y2="283.0" stroke="#000" stroke-width="1.6"/>
<line x1="951.4" y1="311.6" x2="951.5" y2="283.0" stroke="#000" stroke-width="1.6"/>
<line x1="1046.7" y1="366.3" x2="1048.7" y2="329.1" stroke="#000" stroke-width="1.6"/>
<polygon points="1031.8,431.0 998.7,411.7 999.7,375.8 1033.6,394.9" fill="#a39552" fill-opacity="0.45"/>
<line x1="1048.7" y1="329.1" x2="1014.8" y2="311.4" stroke="#000" stroke-width="1.6"/>
<line x1="1094.9" y1="329.3" x2="1098.0" y2="291.2" stroke="#000" stroke-width="1.6"/>
<line x1="1064.8" y1="244.8" x2="1047.5" y2="236.6" stroke="#000" stroke-width="1.6"/>
<line x1="1015.1" y1="421.3" x2="1016.5" y2="385.2" stroke="#000" stroke-width="1.6"/>
<polygon points="904.0,431.6 873.1,412.2 871.7,376.3 903.2,395.4" fill="#a39552" fill-opacity="0.45"/>
<line x1="935.1" y1="215.0" x2="998.3" y2="183.3" stroke="#000" stroke-width="1.6"/>
<line x1="936.1" y1="451.6" x2="998.7" y2="411.7" stroke="#000" stroke-width="1.6"/>
<line x1="936.1" y1="451.6" x2="998.7" y2="411.7" stroke="#000" stroke-width="1.6"/>
<polygon points="1064.8,244.8 1030.6,228.5 1031.9,198.7 1066.6,214.6" fill="#a39552" fill-opacity="0.45"/>
<line x1="951.5" y1="283.0" x2="935.3" y2="274.5" stroke="#000" stroke-width="1.6"/>
<line x1="951.5" y1="283.0" x2="935.3" y2="274.5" stroke="#000" stroke-width="1.6"/>
<line x1="951.5" y1="283.0" x2="935.3" y2="274.5" stroke="#000" stroke-width="1.6"/>
<line x1="951.5" y1="283.0" x2="935.3" y2="274.5" stroke="#000" stroke-width="1.6"/>
<polygon points="951.9,385.5 1013.5,348.2 1014.8,311.4 952.1,348.0" fill="#b09e4c" fill-opacity="0.45"/>
<polygon points="1066.2,451.1 1124.1,411.1 1126.7,384.4 1068.1,423.9" fill="#b09e4c" fill-opacity="0.45"/>
<polygon points="1031.6,320.2 1014.8,311.4 1015.9,282.8 1033.0,291.4" fill="#a39552" fill-opacity="0.45"/>
<line x1="1016.5" y1="385.2" x2="983.3" y2="366.5" stroke="#000" stroke-width="1.6"/>
<line x1="968.4" y1="395.1" x2="1029.9" y2="357.2" stroke="#000" stroke-width="1.6"/>
<line x1="968.4" y1="395.1" x2="1029.9" y2="357.2" stroke="#000" stroke-width="1.6"/>
<polygon points="919.4,405.2 983.3,366.5 951.2,348.5 887.3,385.8" fill="#c9a514" fill-opacity="0.45"/>
<polygon points="887.3,385.8 951.2,348.5 951.4,311.6 886.2,348.3" fill="#b09e4c" fill-opacity="0.45"/>
<polygon points="887.3,385.8 951.2,348.5 951.4,311.6 886.2,348.3" fill="#b09e4c" fill-opacity="0.45"/>
<line x1="999.4" y1="142.5" x2="1000.6" y2="100.0" stroke="#000" stroke-width="1.6"/>
<line x1="983.3" y1="366.5" x2="984.1" y2="329.4" stroke="#000" stroke-width="1.6"/>
<line x1="983.3" y1="366.5" x2="984.1" y2="329.4" stroke="#000" stroke-width="1.6"/>
<line x1="870.3" y1="339.0" x2="935.4" y2="303.0" stroke="#000" stroke-width="1.6"/>
<line x1="870.3" y1="339.0" x2="935.4" y2="303.0" stroke="#000" stroke-width="1.6"/>
<line x1="984.1" y1="329.4" x2="951.4" y2="311.6" stroke="#000" stroke-width="1.6"/>
<line x1="984.1" y1="329.4" x2="951.4" y2="311.6" stroke="#000" stroke-width="1.6"/>
<line x1="984.1" y1="329.4" x2="951.4" y2="311.6" stroke="#000" stroke-width="1.6"/>
<line x1="984.1" y1="329.4" x2="951.4" y2="311.6" stroke="#000" stroke-width="1.6"/>
<line x1="1095.7" y1="319.9" x2="1098.0" y2="291.2" stroke="#000" stroke-width="1.6"/>
<line x1="903.2" y1="395.4" x2="967.1" y2="357.4" stroke="#000" stroke-width="1.6"/>
<line x1="935.3" y1="274.5" x2="935.2" y2="245.2" stroke="#000" stroke-width="1.6"/>
<line x1="935.3" y1="274.5" x2="935.2" y2="245.2" stroke="#000" stroke-width="1.6"/>
<polygon points="1017.5,300.4 1063.0,274.1 1046.0,265.8 1000.4,291.6" fill="#c9a514" fill-opacity="0.45"/>
<line x1="1066.2" y1="451.1" x2="1015.1" y2="421.3" stroke="#000" stroke-width="1.6"/>
<polygon points="919.9,441.5 873.1,412.2 872.1,385.4 919.5,414.4" fill="#a39552" fill-opacity="0.45"/>
<line x1="1066.1" y1="338.2" x2="1014.8" y2="311.4" stroke="#000" stroke-width="1.6"/>
<line x1="984.7" y1="300.5" x2="1046.0" y2="265.8" stroke="#000" stroke-width="1.6"/>
<line x1="984.7" y1="300.5" x2="1046.0" y2="265.8" stroke="#000" stroke-width="1.6"/>
<line x1="1033.7" y1="157.4" x2="999.4" y2="142.5" stroke="#000" stroke-width="1.6"/>
<polygon points="1000.4,291.6 1046.0,265.8 1047.5,236.6 1001.3,262.0" fill="#b09e4c" fill-opacity="0.45"/>
<polygon points="1101.1,366.5 1130.4,347.4 1077.6,320.5 1048.2,338.5" fill="#e8c21a" fill-opacity="0.45"/>
<line x1="967.8" y1="157.6" x2="999.4" y2="142.5" stroke="#000" stroke-width="1.6"/>
<line x1="967.8" y1="157.6" x2="999.4" y2="142.5" stroke="#000" stroke-width="1.6"/>
<polygon points="805.7,452.2 873.1,412.2 872.1,385.4 803.6,425.0" fill="#b09e4c" fill-opacity="0.45"/>
<polygon points="886.2,348.3 951.4,311.6 935.4,303.0 870.3,339.0" fill="#e8c21a" fill-opacity="0.45"/>
<polygon points="886.2,348.3 951.4,311.6 935.4,303.0 870.3,339.0" fill="#c9a514" fill-opacity="0.45"/>
<line x1="872.1" y1="385.4" x2="870.6" y2="348.5" stroke="#000" stroke-width="1.6"/>
<polygon points="1068.0,309.2 1098.0,291.2 1046.0,265.8 1015.9,282.8" fill="#e8c21a" fill-opacity="0.45"/>
<polygon points="1098.0,403.8 1046.2,375.3 1048.2,338.5 1101.1,366.5" fill="#a39552" fill-opacity="0.45"/>
<line x1="1031.9" y1="198.7" x2="1033.7" y2="157.4" stroke="#000" stroke-width="1.6"/>
<line x1="1031.9" y1="198.7" x2="1033.7" y2="157.4" stroke="#000" stroke-width="1.6"/>
<line x1="903.4" y1="404.6" x2="872.1" y2="385.4" stroke="#000" stroke-width="1.6"/>
<line x1="887.3" y1="385.8" x2="871.7" y2="376.3" stroke="#000" stroke-width="1.6"/>
<line x1="1066.1" y1="338.2" x2="1095.7" y2="319.9" stroke="#000" stroke-width="1.6"/>
<line x1="1031.6" y1="320.2" x2="1033.0" y2="291.4" stroke="#000" stroke-width="1.6"/>
<line x1="1031.6" y1="320.2" x2="1033.0" y2="291.4" stroke="#000" stroke-width="1.6"/>
<polygon points="951.5,283.0 935.3,274.5 935.2,245.2 951.6,253.6" fill="#a39552" fill-opacity="0.45"/>
<polygon points="951.5,283.0 935.3,274.5 935.2,245.2 951.6,253.6" fill="#a39552" fill-opacity="0.45"/>
<line x1="1066.2" y1="451.1" x2="1031.8" y2="431.0" stroke="#000" stroke-width="1.6"/>
<polygon points="985.3,270.7 1047.5,236.6 1013.9,220.7 951.6,253.6" fill="#e8c21a" fill-opacity="0.45"/>
<line x1="1050.4" y1="357.1" x2="1094.9" y2="329.3" stroke="#000" stroke-width="1.6"/>
<line x1="903.2" y1="395.4" x2="951.6" y2="366.7" stroke="#000" stroke-width="1.6"/>
<polygon points="1130.4,347.4 1094.9,329.3 1098.0,291.2 1134.2,309.0" fill="#a39552" fill-opacity="0.45"/>
<polygon points="1098.0,403.8 1126.7,384.4 1130.4,347.4 1101.1,366.5" fill="#b09e4c" fill-opacity="0.45"/>
<line x1="1063.7" y1="375.5" x2="1066.1" y2="338.2" stroke="#000" stroke-width="1.6"/>
<line x1="1066.6" y1="214.6" x2="1031.9" y2="198.7" stroke="#000" stroke-width="1.6"/>
<line x1="1066.6" y1="214.6" x2="1031.9" y2="198.7" stroke="#000" stroke-width="1.6"/>
<line x1="968.3" y1="262.1" x2="1030.6" y2="228.5" stroke="#000" stroke-width="1.6"/>
<line x1="968.3" y1="262.1" x2="1030.6" y2="228.5" stroke="#000" stroke-width="1.6"/>
<polygon points="870.3,339.0 935.4,303.0 935.3,274.5 869.1,310.0" fill="#b09e4c" fill-opacity="0.45"/>
<polygon points="984.1,329.4 951.4,311.6 951.5,283.0 984.7,300.5" fill="#a39552" fill-opacity="0.45"/>
<polygon points="984.1,329.4 951.4,311.6 951.5,283.0 984.7,300.5" fill="#a39552" fill-opacity="0.45"/>
<line x1="1017.5" y1="300.4" x2="1063.0" y2="274.1" stroke="#000" stroke-width="1.6"/>
<line x1="1017.5" y1="300.4" x2="1063.0" y2="274.1" stroke="#000" stroke-width="1.6"/>
<line x1="967.3" y1="198.9" x2="967.8" y2="157.6" stroke="#000" stroke-width="1.6"/>
<line x1="967.3" y1="198.9" x2="967.8" y2="157.6" stroke="#000" stroke-width="1.6"/>
<line x1="1066.1" y1="338.2" x2="1031.6" y2="320.2" stroke="#000" stroke-width="1.6"/>
<line x1="1066.1" y1="338.2" x2="1031.6" y2="320.2" stroke="#000" stroke-width="1.6"/>
<polygon points="969.3,472.5 1031.8,431.0 998.7,411.7 936.1,451.6" fill="#c9a514" fill-opacity="0.45"/>
<line x1="1031.8" y1="431.0" x2="1033.6" y2="394.9" stroke="#000" stroke-width="1.6"/>
<line x1="1031.8" y1="431.0" x2="1033.6" y2="394.9" stroke="#000" stroke-width="1.6"/>
<line x1="1033.0" y1="291.4" x2="1015.9" y2="282.8" stroke="#000" stroke-width="1.6"/>
<line x1="1134.2" y1="309.0" x2="1063.0" y2="274.1" stroke="#000" stroke-width="1.6"/>
<polygon points="1002.4,414.9 1063.7,375.5 1029.9,357.2 968.4,395.1" fill="#c9a514" fill-opacity="0.45"/>
<line x1="1000.9" y1="214.8" x2="1031.9" y2="198.7" stroke="#000" stroke-width="1.6"/>
<line x1="1068.1" y1="423.9" x2="1126.7" y2="384.4" stroke="#000" stroke-width="1.6"/>
<polygon points="1066.2,451.1 1015.1,421.3 1016.2,394.4 1068.1,423.9" fill="#a39552" fill-opacity="0.45"/>
<polygon points="968.7,231.5 1031.9,198.7 998.3,183.3 935.1,215.0" fill="#e8c21a" fill-opacity="0.45"/>
<polygon points="984.7,300.5 1046.0,265.8 1047.5,236.6 985.3,270.7" fill="#b09e4c" fill-opacity="0.45"/>
<line x1="936.1" y1="451.6" x2="904.0" y2="431.6" stroke="#000" stroke-width="1.6"/>
<polygon points="936.1,451.6 998.7,411.7 999.7,375.8 935.9,415.2" fill="#b09e4c" fill-opacity="0.45"/>
<polygon points="936.1,451.6 998.7,411.7 999.7,375.8 935.9,415.2" fill="#b09e4c" fill-opacity="0.45"/>
<line x1="1033.6" y1="394.9" x2="999.7" y2="375.8" stroke="#000" stroke-width="1.6"/>
<polygon points="968.4,395.1 1029.9,357.2 1031.6,320.2 968.9,357.5" fill="#b09e4c" fill-opacity="0.45"/>
<polygon points="968.4,395.1 1029.9,357.2 1031.6,320.2 968.9,357.5" fill="#b09e4c" fill-opacity="0.45"/>
<polygon points="1066.1,338.2 1014.8,311.4 1015.9,282.8 1068.0,309.2" fill="#a39552" fill-opacity="0.45"/>
<line x1="1000.9" y1="214.8" x2="967.3" y2="198.9" stroke="#000" stroke-width="1.6"/>
<line x1="1000.9" y1="214.8" x2="967.3" y2="198.9" stroke="#000" stroke-width="1.6"/>
<line x1="1064.8" y1="244.8" x2="1066.6" y2="214.6" stroke="#000" stroke-width="1.6"/>
<line x1="1064.8" y1="244.8" x2="1066.6" y2="214.6" stroke="#000" stroke-width="1.6"/>
<line x1="904.0" y1="431.6" x2="903.2" y2="395.4" stroke="#000" stroke-width="1.6"/>
<line x1="904.0" y1="431.6" x2="903.2" y2="395.4" stroke="#000" stroke-width="1.6"/>
<polygon points="935.9,415.2 999.7,375.8 967.1,357.4 903.2,395.4" fill="#e8c21a" fill-opacity="0.45"/>
<line x1="871.7" y1="376.3" x2="870.3" y2="339.0" stroke="#000" stroke-width="1.6"/>
<line x1="935.1" y1="215.0" x2="967.3" y2="198.9" stroke="#000" stroke-width="1.6"/>
<line x1="919.5" y1="414.4" x2="872.1" y2="385.4" stroke="#000" stroke-width="1.6"/>
<line x1="903.2" y1="395.4" x2="871.7" y2="376.3" stroke="#000" stroke-width="1.6"/>
<line x1="952.1" y1="348.0" x2="1014.8" y2="311.4" stroke="#000" stroke-width="1.6"/>
<line x1="952.1" y1="348.0" x2="1014.8" y2="311.4" stroke="#000" stroke-width="1.6"/>
<line x1="919.4" y1="405.2" x2="983.3" y2="366.5" stroke="#000" stroke-width="1.6"/>
<line x1="886.2" y1="348.3" x2="951.4" y2="311.6" stroke="#000" stroke-width="1.6"/>
<line x1="886.2" y1="348.3" x2="951.4" y2="311.6" stroke="#000" stroke-width="1.6"/>
<line x1="886.2" y1="348.3" x2="951.4" y2="311.6" stroke="#000" stroke-width="1.6"/>
<line x1="886.2" y1="348.3" x2="951.4" y2="311.6" stroke="#000" stroke-width="1.6"/>
<line x1="1001.3" y1="262.0" x2="1047.5" y2="236.6" stroke="#000" stroke-width="1.6"/>
<polygon points="967.8,157.6 999.4,142.5 1000.6,100.0 968.3,114.6" fill="#b09e4c" fill-opacity="0.45"/>
<line x1="951.5" y1="283.0" x2="951.6" y2="253.6" stroke="#000" stroke-width="1.6"/>
<line x1="951.5" y1="283.0" x2="951.6" y2="253.6" stroke="#000" stroke-width="1.6"/>
<line x1="951.5" y1="283.0" x2="951.6" y2="253.6" stroke="#000" stroke-width="1.6"/>
<line x1="951.5" y1="283.0" x2="951.6" y2="253.6" stroke="#000" stroke-width="1.6"/>
<polygon points="1066.1,338.2 1095.7,319.9 1098.0,291.2 1068.0,309.2" fill="#b09e4c" fill-opacity="0.45"/>
<polygon points="852.4,483.8 919.9,441.5 873.1,412.2 805.7,452.2" fill="#c9a514" fill-opacity="0.45"/>
<polygon points="968.3,262.1 1030.6,228.5 1031.9,198.7 968.7,231.5" fill="#b09e4c" fill-opacity="0.45"/>
<polygon points="968.3,262.1 1030.6,228.5 1031.9,198.7 968.7,231.5" fill="#b09e4c" fill-opacity="0.45"/>
<line x1="1100.3" y1="261.6" x2="1064.8" y2="244.8" stroke="#000" stroke-width="1.6"/>
<polygon points="1017.5,300.4 1063.0,274.1 1064.8,244.8 1018.6,270.6" fill="#b09e4c" fill-opacity="0.45"/>
<polygon points="1017.5,300.4 1063.0,274.1 1064.8,244.8 1018.6,270.6" fill="#b09e4c" fill-opacity="0.45"/>
<line x1="803.6" y1="425.0" x2="872.1" y2="385.4" stroke="#000" stroke-width="1.6"/>
<line x1="803.6" y1="425.0" x2="872.1" y2="385.4" stroke="#000" stroke-width="1.6"/>
<line x1="951.6" y1="253.6" x2="935.2" y2="245.2" stroke="#000" stroke-width="1.6"/>
<line x1="951.6" y1="253.6" x2="935.2" y2="245.2" stroke="#000" stroke-width="1.6"/>
<line x1="1069.2" y1="172.8" x2="999.4" y2="142.5" stroke="#000" stroke-width="1.6"/>
<polygon points="1002.1,173.0 1033.7,157.4 999.4,142.5 967.8,157.6" fill="#e8c21a" fill-opacity="0.45"/>
<polygon points="1086.1,376.3 1130.4,347.4 1094.9,329.3 1050.4,357.1" fill="#c9a514" fill-opacity="0.45"/>
<polygon points="1066.1,338.2 1031.6,320.2 1033.0,291.4 1068.0,309.2" fill="#a39552" fill-opacity="0.45"/>
<polygon points="1134.2,309.0 1063.0,274.1 1064.8,244.8 1137.2,279.1" fill="#a39552" fill-opacity="0.45"/>
<line x1="984.9" y1="223.1" x2="1031.9" y2="198.7" stroke="#000" stroke-width="1.6"/>
<polygon points="1066.6,214.6 1031.9,198.7 1033.7,157.4 1069.2,172.8" fill="#a39552" fill-opacity="0.45"/>
<polygon points="968.9,357.5 1031.6,320.2 1014.8,311.4 952.1,348.0" fill="#e8c21a" fill-opacity="0.45"/>
<polygon points="968.9,357.5 1031.6,320.2 1014.8,311.4 952.1,348.0" fill="#c9a514" fill-opacity="0.45"/>
<line x1="935.2" y1="245.2" x2="935.1" y2="215.0" stroke="#000" stroke-width="1.6"/>
<polygon points="887.3,385.8 871.7,376.3 870.3,339.0 886.2,348.3" fill="#a39552" fill-opacity="0.45"/>
<polygon points="903.4,404.6 872.1,385.4 870.6,348.5 902.6,367.3" fill="#a39552" fill-opacity="0.45"/>
<line x1="869.1" y1="310.0" x2="935.3" y2="274.5" stroke="#000" stroke-width="1.6"/>
<line x1="869.1" y1="310.0" x2="935.3" y2="274.5" stroke="#000" stroke-width="1.6"/>
<line x1="984.7" y1="300.5" x2="951.5" y2="283.0" stroke="#000" stroke-width="1.6"/>
<line x1="984.7" y1="300.5" x2="951.5" y2="283.0" stroke="#000" stroke-width="1.6"/>
<line x1="984.7" y1="300.5" x2="951.5" y2="283.0" stroke="#000" stroke-width="1.6"/>
<line x1="984.7" y1="300.5" x2="951.5" y2="283.0" stroke="#000" stroke-width="1.6"/>
<polygon points="1050.4,357.1 1094.9,329.3 1098.0,291.2 1052.6,318.5" fill="#b09e4c" fill-opacity="0.45"/>
<polygon points="1018.6,270.6 1064.8,244.8 1047.5,236.6 1001.3,262.0" fill="#e8c21a" fill-opacity="0.45"/>
<polygon points="1066.2,451.1 1031.8,431.0 1033.6,394.9 1068.8,414.6" fill="#a39552" fill-opacity="0.45"/>
<line x1="1130.4" y1="347.4" x2="1134.2" y2="309.0" stroke="#000" stroke-width="1.6"/>
<polygon points="1002.7,279.6 1064.8,244.8 1030.6,228.5 968.3,262.1" fill="#c9a514" fill-opacity="0.45"/>
<line x1="968.4" y1="395.1" x2="951.9" y2="385.5" stroke="#000" stroke-width="1.6"/>
<polygon points="1000.9,214.8 1031.9,198.7 1033.7,157.4 1002.1,173.0" fill="#b09e4c" fill-opacity="0.45"/>
<line x1="1101.1" y1="366.5" x2="1048.2" y2="338.5" stroke="#000" stroke-width="1.6"/>
<line x1="985.3" y1="270.7" x2="1047.5" y2="236.6" stroke="#000" stroke-width="1.6"/>
<line x1="1134.2" y1="309.0" x2="1098.0" y2="291.2" stroke="#000" stroke-width="1.6"/>
<polygon points="952.1,348.0 1014.8,311.4 1015.9,282.8 952.2,318.9" fill="#b09e4c" fill-opacity="0.45"/>
<polygon points="1000.9,214.8 967.3,198.9 967.8,157.6 1002.1,173.0" fill="#a39552" fill-opacity="0.45"/>
<polygon points="1000.9,214.8 967.3,198.9 967.8,157.6 1002.1,173.0" fill="#a39552" fill-opacity="0.45"/>
<line x1="1068.0" y1="309.2" x2="1015.9" y2="282.8" stroke="#000" stroke-width="1.6"/>
<line x1="919.9" y1="441.5" x2="919.5" y2="414.4" stroke="#000" stroke-width="1.6"/>
<polygon points="886.2,348.3 951.4,311.6 951.5,283.0 885.3,319.1" fill="#b09e4c" fill-opacity="0.45"/>
<polygon points="886.2,348.3 951.4,311.6 951.5,283.0 885.3,319.1" fill="#b09e4c" fill-opacity="0.45"/>
<line x1="1068.1" y1="423.9" x2="1016.2" y2="394.4" stroke="#000" stroke-width="1.6"/>
<line x1="1101.1" y1="366.5" x2="1130.4" y2="347.4" stroke="#000" stroke-width="1.6"/>
<polygon points="935.1,215.0 967.3,198.9 967.8,157.6 934.9,173.3" fill="#b09e4c" fill-opacity="0.45"/>
<line x1="969.3" y1="472.5" x2="1031.8" y2="431.0" stroke="#000" stroke-width="1.6"/>
<line x1="969.3" y1="472.5" x2="1031.8" y2="431.0" stroke="#000" stroke-width="1.6"/>
<line x1="984.1" y1="329.4" x2="984.7" y2="300.5" stroke="#000" stroke-width="1.6"/>
<line x1="984.1" y1="329.4" x2="984.7" y2="300.5" stroke="#000" stroke-width="1.6"/>
<line x1="1002.4" y1="414.9" x2="1063.7" y2="375.5" stroke="#000" stroke-width="1.6"/>
<polygon points="1100.3,261.6 1064.8,244.8 1066.6,214.6 1102.8,231.1" fill="#a39552" fill-opacity="0.45"/>
<line x1="968.3" y1="262.1" x2="935.2" y2="245.2" stroke="#000" stroke-width="1.6"/>
<line x1="1098.0" y1="403.8" x2="1101.1" y2="366.5" stroke="#000" stroke-width="1.6"/>
<line x1="1017.5" y1="300.4" x2="1000.4" y2="291.6" stroke="#000" stroke-width="1.6"/>
<line x1="1017.5" y1="300.4" x2="1000.4" y2="291.6" stroke="#000" stroke-width="1.6"/>
<polygon points="936.1,451.6 904.0,431.6 903.2,395.4 935.9,415.2" fill="#a39552" fill-opacity="0.45"/>
<polygon points="885.3,319.1 951.5,283.0 935.3,274.5 869.1,310.0" fill="#e8c21a" fill-opacity="0.45"/>
<polygon points="885.3,319.1 951.5,283.0 935.3,274.5 869.1,310.0" fill="#c9a514" fill-opacity="0.45"/>
<line x1="968.3" y1="114.6" x2="1000.6" y2="100.0" stroke="#000" stroke-width="1.6"/>
<line x1="1068.0" y1="309.2" x2="1098.0" y2="291.2" stroke="#000" stroke-width="1.6"/>
<polygon points="968.7,231.5 1000.9,214.8 967.3,198.9 935.1,215.0" fill="#c9a514" fill-opacity="0.45"/>
<line x1="968.7" y1="231.5" x2="1031.9" y2="198.7" stroke="#000" stroke-width="1.6"/>
<line x1="968.7" y1="231.5" x2="1031.9" y2="198.7" stroke="#000" stroke-width="1.6"/>
<line x1="968.9" y1="357.5" x2="1031.6" y2="320.2" stroke="#000" stroke-width="1.6"/>
<line x1="968.9" y1="357.5" x2="1031.6" y2="320.2" stroke="#000" stroke-width="1.6"/>
<line x1="968.9" y1="357.5" x2="1031.6" y2="320.2" stroke="#000" stroke-width="1.6"/>
<line x1="968.9" y1="357.5" x2="1031.6" y2="320.2" stroke="#000" stroke-width="1.6"/>
<polygon points="1069.2,172.8 999.4,142.5 1000.6,100.0 1071.9,129.3" fill="#a39552" fill-opacity="0.45"/>
<polygon points="919.4,405.2 983.3,366.5 984.1,329.4 918.9,367.4" fill="#b09e4c" fill-opacity="0.45"/>
<polygon points="918.9,367.4 984.1,329.4 951.4,311.6 886.2,348.3" fill="#e8c21a" fill-opacity="0.45"/>
<polygon points="918.9,367.4 984.1,329.4 951.4,311.6 886.2,348.3" fill="#c9a514" fill-opacity="0.45"/>
<line x1="919.4" y1="405.2" x2="887.3" y2="385.8" stroke="#000" stroke-width="1.6"/>
<line x1="935.9" y1="415.2" x2="999.7" y2="375.8" stroke="#000" stroke-width="1.6"/>
<line x1="935.9" y1="415.2" x2="999.7" y2="375.8" stroke="#000" stroke-width="1.6"/>
<line x1="887.3" y1="385.8" x2="886.2" y2="348.3" stroke="#000" stroke-width="1.6"/>
<line x1="887.3" y1="385.8" x2="886.2" y2="348.3" stroke="#000" stroke-width="1.6"/>
<line x1="1018.6" y1="270.6" x2="1064.8" y2="244.8" stroke="#000" stroke-width="1.6"/>
<line x1="1018.6" y1="270.6" x2="1064.8" y2="244.8" stroke="#000" stroke-width="1.6"/>
<polygon points="869.1,310.0 935.3,274.5 935.2,245.2 868.0,280.1" fill="#b09e4c" fill-opacity="0.45"/>
<polygon points="984.7,300.5 951.5,283.0 951.6,253.6 985.3,270.7" fill="#a39552" fill-opacity="0.45"/>
<polygon points="984.7,300.5 951.5,283.0 951.6,253.6 985.3,270.7" fill="#a39552" fill-opacity="0.45"/>
<line x1="1000.4" y1="291.6" x2="1001.3" y2="262.0" stroke="#000" stroke-width="1.6"/>
<line x1="1000.4" y1="291.6" x2="1001.3" y2="262.0" stroke="#000" stroke-width="1.6"/>
<line x1="951.9" y1="385.5" x2="952.1" y2="348.0" stroke="#000" stroke-width="1.6"/>
<polygon points="984.9,223.1 1031.9,198.7 1033.7,157.4 985.8,181.1" fill="#b09e4c" fill-opacity="0.45"/>
<line x1="1137.2" y1="279.1" x2="1064.8" y2="244.8" stroke="#000" stroke-width="1.6"/>
<line x1="1068.0" y1="309.2" x2="1033.0" y2="291.4" stroke="#000" stroke-width="1.6"/>
<line x1="805.7" y1="452.2" x2="803.6" y2="425.0" stroke="#000" stroke-width="1.6"/>
<line x1="1066.2" y1="451.1" x2="1068.1" y2="423.9" stroke="#000" stroke-width="1.6"/>
<polygon points="803.6,425.0 872.1,385.4 870.6,348.5 800.7,387.4" fill="#b09e4c" fill-opacity="0.45"/>
<polygon points="834.9,445.7 903.4,404.6 872.1,385.4 803.6,425.0" fill="#c9a514" fill-opacity="0.45"/>
<line x1="1069.2" y1="172.8" x2="1033.7" y2="157.4" stroke="#000" stroke-width="1.6"/>
<polygon points="1019.8,239.9 1066.6,214.6 1031.9,198.7 984.9,223.1" fill="#c9a514" fill-opacity="0.45"/>
<line x1="1086.1" y1="376.3" x2="1130.4" y2="347.4" stroke="#000" stroke-width="1.6"/>
<line x1="967.8" y1="157.6" x2="968.3" y2="114.6" stroke="#000" stroke-width="1.6"/>
<line x1="1066.1" y1="338.2" x2="1068.0" y2="309.2" stroke="#000" stroke-width="1.6"/>
<line x1="1066.1" y1="338.2" x2="1068.0" y2="309.2" stroke="#000" stroke-width="1.6"/>
<polygon points="1037.7,189.1 1069.2,172.8 999.4,142.5 967.8,157.6" fill="#c9a514" fill-opacity="0.45"/>
<polygon points="968.3,262.1 935.2,245.2 935.1,215.0 968.7,231.5" fill="#a39552" fill-opacity="0.45"/>
<polygon points="1089.1,337.3 1134.2,309.0 1063.0,274.1 1017.5,300.4" fill="#c9a514" fill-opacity="0.45"/>
<line x1="1066.6" y1="214.6" x2="1069.2" y2="172.8" stroke="#000" stroke-width="1.6"/>
<line x1="952.2" y1="318.9" x2="1015.9" y2="282.8" stroke="#000" stroke-width="1.6"/>
<line x1="1002.1" y1="173.0" x2="1033.7" y2="157.4" stroke="#000" stroke-width="1.6"/>
<line x1="870.6" y1="348.5" x2="869.1" y2="310.0" stroke="#000" stroke-width="1.6"/>
<polygon points="1017.5,300.4 1000.4,291.6 1001.3,262.0 1018.6,270.6" fill="#a39552" fill-opacity="0.45"/>
<polygon points="1017.5,300.4 1000.4,291.6 1001.3,262.0 1018.6,270.6" fill="#a39552" fill-opacity="0.45"/>
<line x1="1066.2" y1="451.1" x2="1068.8" y2="414.6" stroke="#000" stroke-width="1.6"/>
<polygon points="968.4,395.1 951.9,385.5 952.1,348.0 968.9,357.5" fill="#a39552" fill-opacity="0.45"/>
<line x1="1052.6" y1="318.5" x2="1098.0" y2="291.2" stroke="#000" stroke-width="1.6"/>
<line x1="886.2" y1="348.3" x2="870.3" y2="339.0" stroke="#000" stroke-width="1.6"/>
<line x1="886.2" y1="348.3" x2="870.3" y2="339.0" stroke="#000" stroke-width="1.6"/>
<line x1="885.3" y1="319.1" x2="951.5" y2="283.0" stroke="#000" stroke-width="1.6"/>
<line x1="885.3" y1="319.1" x2="951.5" y2="283.0" stroke="#000" stroke-width="1.6"/>
<line x1="885.3" y1="319.1" x2="951.5" y2="283.0" stroke="#000" stroke-width="1.6"/>
<line x1="885.3" y1="319.1" x2="951.5" y2="283.0" stroke="#000" stroke-width="1.6"/>
<polygon points="1003.9,494.1 1066.2,451.1 1031.8,431.0 969.3,472.5" fill="#c9a514" fill-opacity="0.45"/>
<line x1="902.6" y1="367.3" x2="870.6" y2="348.5" stroke="#000" stroke-width="1.6"/>
<line x1="902.6" y1="367.3" x2="870.6" y2="348.5" stroke="#000" stroke-width="1.6"/>
<line x1="1102.8" y1="231.1" x2="1066.6" y2="214.6" stroke="#000" stroke-width="1.6"/>
<line x1="903.4" y1="404.6" x2="902.6" y2="367.3" stroke="#000" stroke-width="1.6"/>
<line x1="1002.1" y1="173.0" x2="967.8" y2="157.6" stroke="#000" stroke-width="1.6"/>
<line x1="1002.1" y1="173.0" x2="967.8" y2="157.6" stroke="#000" stroke-width="1.6"/>
<line x1="1002.7" y1="279.6" x2="1064.8" y2="244.8" stroke="#000" stroke-width="1.6"/>
<line x1="1002.7" y1="279.6" x2="1064.8" y2="244.8" stroke="#000" stroke-width="1.6"/>
<polygon points="968.9,357.5 1031.6,320.2 1033.0,291.4 969.3,328.2" fill="#b09e4c" fill-opacity="0.45"/>
<polygon points="968.9,357.5 1031.6,320.2 1033.0,291.4 969.3,328.2" fill="#b09e4c" fill-opacity="0.45"/>
<line x1="934.9" y1="173.3" x2="967.8" y2="157.6" stroke="#000" stroke-width="1.6"/>
<line x1="1067.3" y1="204.3" x2="1069.2" y2="172.8" stroke="#000" stroke-width="1.6"/>
<line x1="1068.8" y1="414.6" x2="1033.6" y2="394.9" stroke="#000" stroke-width="1.6"/>
<line x1="870.3" y1="339.0" x2="869.1" y2="310.0" stroke="#000" stroke-width="1.6"/>
<line x1="852.4" y1="483.8" x2="919.9" y2="441.5" stroke="#000" stroke-width="1.6"/>
<polygon points="969.3,472.5 1031.8,431.0 1033.6,394.9 969.9,435.8" fill="#b09e4c" fill-opacity="0.45"/>
<polygon points="969.3,472.5 1031.8,431.0 1033.6,394.9 969.9,435.8" fill="#b09e4c" fill-opacity="0.45"/>
<polygon points="1002.4,414.9 1063.7,375.5 1066.1,338.2 1003.6,377.0" fill="#b09e4c" fill-opacity="0.45"/>
<polygon points="850.9,456.3 919.5,414.4 872.1,385.4 803.6,425.0" fill="#e8c21a" fill-opacity="0.45"/>
<line x1="1000.9" y1="214.8" x2="1002.1" y2="173.0" stroke="#000" stroke-width="1.6"/>
<line x1="1000.9" y1="214.8" x2="1002.1" y2="173.0" stroke="#000" stroke-width="1.6"/>
<line x1="969.3" y1="472.5" x2="936.1" y2="451.6" stroke="#000" stroke-width="1.6"/>
<line x1="1100.3" y1="261.6" x2="1102.8" y2="231.1" stroke="#000" stroke-width="1.6"/>
<line x1="1071.9" y1="129.3" x2="1000.6" y2="100.0" stroke="#000" stroke-width="1.6"/>
<polygon points="1003.6,377.0 1066.1,338.2 1031.6,320.2 968.9,357.5" fill="#e8c21a" fill-opacity="0.45"/>
<polygon points="1003.6,377.0 1066.1,338.2 1031.6,320.2 968.9,357.5" fill="#c9a514" fill-opacity="0.45"/>
<line x1="868.0" y1="280.1" x2="935.2" y2="245.2" stroke="#000" stroke-width="1.6"/>
<line x1="985.3" y1="270.7" x2="951.6" y2="253.6" stroke="#000" stroke-width="1.6"/>
<line x1="985.3" y1="270.7" x2="951.6" y2="253.6" stroke="#000" stroke-width="1.6"/>
<polygon points="969.3,328.2 1033.0,291.4 1015.9,282.8 952.2,318.9" fill="#e8c21a" fill-opacity="0.45"/>
<polygon points="1003.6,248.7 1066.6,214.6 1031.9,198.7 968.7,231.5" fill="#e8c21a" fill-opacity="0.45"/>
<polygon points="969.9,435.8 1033.6,394.9 999.7,375.8 935.9,415.2" fill="#e8c21a" fill-opacity="0.45"/>
<line x1="935.1" y1="215.0" x2="934.9" y2="173.3" stroke="#000" stroke-width="1.6"/>
<line x1="936.1" y1="451.6" x2="935.9" y2="415.2" stroke="#000" stroke-width="1.6"/>
<line x1="936.1" y1="451.6" x2="935.9" y2="415.2" stroke="#000" stroke-width="1.6"/>
<line x1="852.4" y1="483.8" x2="805.7" y2="452.2" stroke="#000" stroke-width="1.6"/>
<line x1="1002.4" y1="414.9" x2="968.4" y2="395.1" stroke="#000" stroke-width="1.6"/>
<polygon points="919.4,405.2 887.3,385.8 886.2,348.3 918.9,367.4" fill="#a39552" fill-opacity="0.45"/>
<line x1="1137.2" y1="279.1" x2="1100.3" y2="261.6" stroke="#000" stroke-width="1.6"/>
<line x1="1100.3" y1="261.6" x2="1103.6" y2="220.7" stroke="#000" stroke-width="1.6"/>
<line x1="935.9" y1="415.2" x2="903.2" y2="395.4" stroke="#000" stroke-width="1.6"/>
<line x1="985.8" y1="181.1" x2="1033.7" y2="157.4" stroke="#000" stroke-width="1.6"/>
<line x1="1017.5" y1="300.4" x2="1018.6" y2="270.6" stroke="#000" stroke-width="1.6"/>
<line x1="1017.5" y1="300.4" x2="1018.6" y2="270.6" stroke="#000" stroke-width="1.6"/>
<line x1="1017.5" y1="300.4" x2="1018.6" y2="270.6" stroke="#000" stroke-width="1.6"/>
<line x1="1017.5" y1="300.4" x2="1018.6" y2="270.6" stroke="#000" stroke-width="1.6"/>
<line x1="968.4" y1="395.1" x2="968.9" y2="357.5" stroke="#000" stroke-width="1.6"/>
<line x1="968.4" y1="395.1" x2="968.9" y2="357.5" stroke="#000" stroke-width="1.6"/>
<line x1="968.7" y1="231.5" x2="1000.9" y2="214.8" stroke="#000" stroke-width="1.6"/>
<line x1="918.9" y1="367.4" x2="984.1" y2="329.4" stroke="#000" stroke-width="1.6"/>
<line x1="918.9" y1="367.4" x2="984.1" y2="329.4" stroke="#000" stroke-width="1.6"/>
<line x1="968.7" y1="231.5" x2="935.1" y2="215.0" stroke="#000" stroke-width="1.6"/>
<line x1="968.7" y1="231.5" x2="935.1" y2="215.0" stroke="#000" stroke-width="1.6"/>
<polygon points="885.3,319.1 951.5,283.0 951.6,253.6 884.3,289.1" fill="#b09e4c" fill-opacity="0.45"/>
<polygon points="885.3,319.1 951.5,283.0 951.6,253.6 884.3,289.1" fill="#b09e4c" fill-opacity="0.45"/>
<line x1="1086.1" y1="376.3" x2="1050.4" y2="357.1" stroke="#000" stroke-width="1.6"/>
<line x1="984.7" y1="300.5" x2="985.3" y2="270.7" stroke="#000" stroke-width="1.6"/>
<line x1="984.7" y1="300.5" x2="985.3" y2="270.7" stroke="#000" stroke-width="1.6"/>
<polygon points="886.2,348.3 870.3,339.0 869.1,310.0 885.3,319.1" fill="#a39552" fill-opacity="0.45"/>
<polygon points="1002.7,279.6 1064.8,244.8 1066.6,214.6 1003.6,248.7" fill="#b09e4c" fill-opacity="0.45"/>
<polygon points="1002.7,279.6 1064.8,244.8 1066.6,214.6 1003.6,248.7" fill="#b09e4c" fill-opacity="0.45"/>
<line x1="1134.2" y1="309.0" x2="1137.2" y2="279.1" stroke="#000" stroke-width="1.6"/>
<polygon points="1086.1,376.3 1130.4,347.4 1134.2,309.0 1089.1,337.3" fill="#b09e4c" fill-opacity="0.45"/>
<line x1="1050.4" y1="357.1" x2="1052.6" y2="318.5" stroke="#000" stroke-width="1.6"/>
<line x1="1018.6" y1="270.6" x2="1001.3" y2="262.0" stroke="#000" stroke-width="1.6"/>
<line x1="1018.6" y1="270.6" x2="1001.3" y2="262.0" stroke="#000" stroke-width="1.6"/>
<line x1="1052.6" y1="318.5" x2="1017.5" y2="300.4" stroke="#000" stroke-width="1.6"/>
<polygon points="884.3,289.1 951.6,253.6 935.2,245.2 868.0,280.1" fill="#e8c21a" fill-opacity="0.45"/>
<polygon points="1089.1,337.3 1134.2,309.0 1098.0,291.2 1052.6,318.5" fill="#e8c21a" fill-opacity="0.45"/>
<line x1="800.7" y1="387.4" x2="870.6" y2="348.5" stroke="#000" stroke-width="1.6"/>
<line x1="800.7" y1="387.4" x2="870.6" y2="348.5" stroke="#000" stroke-width="1.6"/>
<line x1="952.1" y1="357.5" x2="952.2" y2="328.7" stroke="#000" stroke-width="1.6"/>
<line x1="1019.8" y1="239.9" x2="1066.6" y2="214.6" stroke="#000" stroke-width="1.6"/>
<line x1="834.9" y1="445.7" x2="903.4" y2="404.6" stroke="#000" stroke-width="1.6"/>
<line x1="969.3" y1="328.2" x2="1033.0" y2="291.4" stroke="#000" stroke-width="1.6"/>
<line x1="969.3" y1="328.2" x2="1033.0" y2="291.4" stroke="#000" stroke-width="1.6"/>
<polygon points="902.6,367.3 870.6,348.5 869.1,310.0 901.7,328.5" fill="#a39552" fill-opacity="0.45"/>
<polygon points="918.5,338.0 984.7,300.5 951.5,283.0 885.3,319.1" fill="#e8c21a" fill-opacity="0.45"/>
<polygon points="918.5,338.0 984.7,300.5 951.5,283.0 885.3,319.1" fill="#c9a514" fill-opacity="0.45"/>
<polygon points="1038.4,297.7 1100.3,261.6 1064.8,244.8 1002.7,279.6" fill="#c9a514" fill-opacity="0.45"/>
<polygon points="852.4,483.8 919.9,441.5 919.5,414.4 850.9,456.3" fill="#b09e4c" fill-opacity="0.45"/>
<line x1="1003.9" y1="494.1" x2="1066.2" y2="451.1" stroke="#000" stroke-width="1.6"/>
<line x1="968.3" y1="262.1" x2="968.7" y2="231.5" stroke="#000" stroke-width="1.6"/>
<line x1="968.3" y1="262.1" x2="968.7" y2="231.5" stroke="#000" stroke-width="1.6"/>
<line x1="968.3" y1="262.1" x2="968.7" y2="231.5" stroke="#000" stroke-width="1.6"/>
<line x1="935.5" y1="328.3" x2="1000.4" y2="291.6" stroke="#000" stroke-width="1.6"/>
<line x1="968.9" y1="357.5" x2="952.1" y2="348.0" stroke="#000" stroke-width="1.6"/>
<line x1="968.9" y1="357.5" x2="952.1" y2="348.0" stroke="#000" stroke-width="1.6"/>
<line x1="1037.7" y1="189.1" x2="967.8" y2="157.6" stroke="#000" stroke-width="1.6"/>
<polygon points="969.2,189.3 1002.1,173.0 967.8,157.6 934.9,173.3" fill="#e8c21a" fill-opacity="0.45"/>
<polygon points="852.4,483.8 805.7,452.2 803.6,425.0 850.9,456.3" fill="#a39552" fill-opacity="0.45"/>
<line x1="952.9" y1="483.4" x2="919.7" y2="462.1" stroke="#000" stroke-width="1.6"/>
<polygon points="918.9,367.4 984.1,329.4 984.7,300.5 918.5,338.0" fill="#b09e4c" fill-opacity="0.45"/>
<line x1="1053.3" y1="425.0" x2="1018.1" y2="404.8" stroke="#000" stroke-width="1.6"/>
<line x1="886.2" y1="348.3" x2="885.3" y2="319.1" stroke="#000" stroke-width="1.6"/>
<line x1="886.2" y1="348.3" x2="885.3" y2="319.1" stroke="#000" stroke-width="1.6"/>
<line x1="1020.2" y1="229.5" x2="1067.3" y2="204.3" stroke="#000" stroke-width="1.6"/>
<polygon points="969.3,472.5 936.1,451.6 935.9,415.2 969.9,435.8" fill="#a39552" fill-opacity="0.45"/>
<polygon points="1091.4,307.0 1137.2,279.1 1064.8,244.8 1018.6,270.6" fill="#e8c21a" fill-opacity="0.45"/>
<polygon points="968.7,231.5 1000.9,214.8 1002.1,173.0 969.2,189.3" fill="#b09e4c" fill-opacity="0.45"/>
<polygon points="1137.2,279.1 1100.3,261.6 1103.6,220.7 1141.3,237.7" fill="#a39552" fill-opacity="0.45"/>
<line x1="952.1" y1="348.0" x2="952.2" y2="318.9" stroke="#000" stroke-width="1.6"/>
<line x1="1003.6" y1="377.0" x2="1066.1" y2="338.2" stroke="#000" stroke-width="1.6"/>
<line x1="1003.6" y1="377.0" x2="1066.1" y2="338.2" stroke="#000" stroke-width="1.6"/>
<line x1="1002.7" y1="279.6" x2="968.3" y2="262.1" stroke="#000" stroke-width="1.6"/>
<line x1="1002.7" y1="279.6" x2="968.3" y2="262.1" stroke="#000" stroke-width="1.6"/>
<polygon points="968.7,231.5 935.1,215.0 934.9,173.3 969.2,189.3" fill="#a39552" fill-opacity="0.45"/>
<line x1="1141.3" y1="237.7" x2="1067.3" y2="204.3" stroke="#000" stroke-width="1.6"/>
<line x1="919.7" y1="462.1" x2="919.2" y2="425.5" stroke="#000" stroke-width="1.6"/>
<line x1="969.9" y1="435.8" x2="1033.6" y2="394.9" stroke="#000" stroke-width="1.6"/>
<line x1="969.9" y1="435.8" x2="1033.6" y2="394.9" stroke="#000" stroke-width="1.6"/>
<line x1="1018.1" y1="404.8" x2="1019.7" y2="367.0" stroke="#000" stroke-width="1.6"/>
<polygon points="1052.6,318.5 1017.5,300.4 1018.6,270.6 1054.3,288.4" fill="#a39552" fill-opacity="0.45"/>
<line x1="884.3" y1="289.1" x2="951.6" y2="253.6" stroke="#000" stroke-width="1.6"/>
<line x1="884.3" y1="289.1" x2="951.6" y2="253.6" stroke="#000" stroke-width="1.6"/>
<line x1="984.9" y1="223.1" x2="985.8" y2="181.1" stroke="#000" stroke-width="1.6"/>
<line x1="984.9" y1="223.1" x2="985.8" y2="181.1" stroke="#000" stroke-width="1.6"/>
<polygon points="1039.7,145.0 1071.9,129.3 1000.6,100.0 968.3,114.6" fill="#e8c21a" fill-opacity="0.45"/>
<polygon points="952.6,337.9 1017.5,300.4 1000.4,291.6 935.5,328.3" fill="#c9a514" fill-opacity="0.45"/>
<polygon points="1002.4,414.9 968.4,395.1 968.9,357.5 1003.6,377.0" fill="#a39552" fill-opacity="0.45"/>
<line x1="1003.6" y1="248.7" x2="1066.6" y2="214.6" stroke="#000" stroke-width="1.6"/>
<line x1="1003.6" y1="248.7" x2="1066.6" y2="214.6" stroke="#000" stroke-width="1.6"/>
<polygon points="1021.5,197.5 1069.2,172.8 1033.7,157.4 985.8,181.1" fill="#e8c21a" fill-opacity="0.45"/>
<line x1="885.3" y1="319.1" x2="869.1" y2="310.0" stroke="#000" stroke-width="1.6"/>
<line x1="885.3" y1="319.1" x2="869.1" y2="310.0" stroke="#000" stroke-width="1.6"/>
<polygon points="1086.1,376.3 1050.4,357.1 1052.6,318.5 1089.1,337.3" fill="#a39552" fill-opacity="0.45"/>
<line x1="1069.2" y1="172.8" x2="1071.9" y2="129.3" stroke="#000" stroke-width="1.6"/>
<line x1="1003.3" y1="386.6" x2="952.1" y2="357.5" stroke="#000" stroke-width="1.6"/>
<line x1="803.6" y1="425.0" x2="800.7" y2="387.4" stroke="#000" stroke-width="1.6"/>
<line x1="919.4" y1="405.2" x2="918.9" y2="367.4" stroke="#000" stroke-width="1.6"/>
<line x1="918.9" y1="367.4" x2="886.2" y2="348.3" stroke="#000" stroke-width="1.6"/>
<line x1="918.9" y1="367.4" x2="886.2" y2="348.3" stroke="#000" stroke-width="1.6"/>
<line x1="834.9" y1="445.7" x2="803.6" y2="425.0" stroke="#000" stroke-width="1.6"/>
<line x1="1019.8" y1="239.9" x2="984.9" y2="223.1" stroke="#000" stroke-width="1.6"/>
<line x1="1019.8" y1="239.9" x2="984.9" y2="223.1" stroke="#000" stroke-width="1.6"/>
<polygon points="1019.8,239.9 1066.6,214.6 1069.2,172.8 1021.5,197.5" fill="#b09e4c" fill-opacity="0.45"/>
<line x1="869.1" y1="310.0" x2="868.0" y2="280.1" stroke="#000" stroke-width="1.6"/>
<line x1="869.1" y1="310.0" x2="868.0" y2="280.1" stroke="#000" stroke-width="1.6"/>
<polygon points="935.5,328.3 1000.4,291.6 1001.3,262.0 935.4,298.1" fill="#b09e4c" fill-opacity="0.45"/>
<line x1="868.5" y1="494.8" x2="919.7" y2="462.1" stroke="#000" stroke-width="1.6"/>
<line x1="1089.1" y1="337.3" x2="1017.5" y2="300.4" stroke="#000" stroke-width="1.6"/>
<polygon points="968.9,357.5 952.1,348.0 952.2,318.9 969.3,328.2" fill="#a39552" fill-opacity="0.45"/>
<polygon points="800.7,387.4 870.6,348.5 869.1,310.0 797.6,348.3" fill="#b09e4c" fill-opacity="0.45"/>
<line x1="1089.1" y1="337.3" x2="1134.2" y2="309.0" stroke="#000" stroke-width="1.6"/>
<line x1="1089.1" y1="337.3" x2="1134.2" y2="309.0" stroke="#000" stroke-width="1.6"/>
<polygon points="1004.5,347.4 1068.0,309.2 1033.0,291.4 969.3,328.2" fill="#e8c21a" fill-opacity="0.45"/>
<polygon points="1037.7,189.1 967.8,157.6 968.3,114.6 1039.7,145.0" fill="#a39552" fill-opacity="0.45"/>
<polygon points="832.5,407.8 902.6,367.3 870.6,348.5 800.7,387.4" fill="#e8c21a" fill-opacity="0.45"/>
<polygon points="832.5,407.8 902.6,367.3 870.6,348.5 800.7,387.4" fill="#c9a514" fill-opacity="0.45"/>
<polygon points="1020.2,229.5 1067.3,204.3 1069.2,172.8 1021.5,197.5" fill="#b09e4c" fill-opacity="0.45"/>
<polygon points="834.9,445.7 903.4,404.6 902.6,367.3 832.5,407.8" fill="#b09e4c" fill-opacity="0.45"/>
<line x1="850.9" y1="456.3" x2="919.5" y2="414.4" stroke="#000" stroke-width="1.6"/>
<line x1="1002.1" y1="173.0" x2="1003.3" y2="129.5" stroke="#000" stroke-width="1.6"/>
<line x1="969.9" y1="435.8" x2="1018.1" y2="404.8" stroke="#000" stroke-width="1.6"/>
<polygon points="1002.7,279.6 968.3,262.1 968.7,231.5 1003.6,248.7" fill="#a39552" fill-opacity="0.45"/>
<polygon points="1002.7,279.6 968.3,262.1 968.7,231.5 1003.6,248.7" fill="#a39552" fill-opacity="0.45"/>
<polygon points="1141.3,237.7 1067.3,204.3 1069.2,172.8 1144.5,205.5" fill="#a39552" fill-opacity="0.45"/>
<line x1="1037.7" y1="189.1" x2="1069.2" y2="172.8" stroke="#000" stroke-width="1.6"/>
<line x1="1038.4" y1="297.7" x2="1100.3" y2="261.6" stroke="#000" stroke-width="1.6"/>
<line x1="1038.4" y1="297.7" x2="1100.3" y2="261.6" stroke="#000" stroke-width="1.6"/>
<polygon points="1003.6,377.0 1066.1,338.2 1068.0,309.2 1004.5,347.4" fill="#b09e4c" fill-opacity="0.45"/>
<polygon points="1003.9,494.1 1066.2,451.1 1068.8,414.6 1005.2,457.2" fill="#b09e4c" fill-opacity="0.45"/>
<line x1="901.7" y1="328.5" x2="869.1" y2="310.0" stroke="#000" stroke-width="1.6"/>
<line x1="952.6" y1="337.9" x2="1017.5" y2="300.4" stroke="#000" stroke-width="1.6"/>
<line x1="952.6" y1="337.9" x2="1017.5" y2="300.4" stroke="#000" stroke-width="1.6"/>
<line x1="918.5" y1="338.0" x2="984.7" y2="300.5" stroke="#000" stroke-width="1.6"/>
<line x1="918.5" y1="338.0" x2="984.7" y2="300.5" stroke="#000" stroke-width="1.6"/>
<line x1="902.6" y1="367.3" x2="901.7" y2="328.5" stroke="#000" stroke-width="1.6"/>
<line x1="884.7" y1="397.2" x2="952.1" y2="357.5" stroke="#000" stroke-width="1.6"/>
<polygon points="885.3,319.1 869.1,310.0 868.0,280.1 884.3,289.1" fill="#a39552" fill-opacity="0.45"/>
<line x1="850.9" y1="456.3" x2="803.6" y2="425.0" stroke="#000" stroke-width="1.6"/>
<line x1="1003.9" y1="494.1" x2="969.3" y2="472.5" stroke="#000" stroke-width="1.6"/>
<line x1="1003.9" y1="494.1" x2="969.3" y2="472.5" stroke="#000" stroke-width="1.6"/>
<line x1="1037.7" y1="189.1" x2="1002.1" y2="173.0" stroke="#000" stroke-width="1.6"/>
<line x1="1054.3" y1="288.4" x2="1018.6" y2="270.6" stroke="#000" stroke-width="1.6"/>
<polygon points="1005.2,457.2 1068.8,414.6 1033.6,394.9 969.9,435.8" fill="#e8c21a" fill-opacity="0.45"/>
<polygon points="1053.3,425.0 1018.1,404.8 1019.7,367.0 1055.7,386.8" fill="#a39552" fill-opacity="0.45"/>
<polygon points="1003.3,386.6 952.1,357.5 952.2,328.7 1004.2,357.4" fill="#a39552" fill-opacity="0.45"/>
<polygon points="918.9,367.4 886.2,348.3 885.3,319.1 918.5,338.0" fill="#a39552" fill-opacity="0.45"/>
<line x1="1071.4" y1="376.7" x2="1035.5" y2="357.2" stroke="#000" stroke-width="1.6"/>
<line x1="969.2" y1="189.3" x2="1002.1" y2="173.0" stroke="#000" stroke-width="1.6"/>
<polygon points="952.9,483.4 919.7,462.1 919.2,425.5 953.1,446.5" fill="#a39552" fill-opacity="0.45"/>
<line x1="1137.2" y1="279.1" x2="1141.3" y2="237.7" stroke="#000" stroke-width="1.6"/>
<line x1="1141.3" y1="237.7" x2="1103.6" y2="220.7" stroke="#000" stroke-width="1.6"/>
<polygon points="1039.9,266.6 1102.8,231.1 1066.6,214.6 1003.6,248.7" fill="#e8c21a" fill-opacity="0.45"/>
<line x1="969.2" y1="189.3" x2="934.9" y2="173.3" stroke="#000" stroke-width="1.6"/>
<line x1="968.9" y1="357.5" x2="969.3" y2="328.2" stroke="#000" stroke-width="1.6"/>
<line x1="968.9" y1="357.5" x2="969.3" y2="328.2" stroke="#000" stroke-width="1.6"/>
<line x1="969.3" y1="472.5" x2="969.9" y2="435.8" stroke="#000" stroke-width="1.6"/>
<line x1="969.3" y1="472.5" x2="969.9" y2="435.8" stroke="#000" stroke-width="1.6"/>
<line x1="969.3" y1="472.5" x2="969.9" y2="435.8" stroke="#000" stroke-width="1.6"/>
<line x1="1035.5" y1="357.2" x2="1037.4" y2="318.0" stroke="#000" stroke-width="1.6"/>
<polygon points="1089.1,337.3 1017.5,300.4 1018.6,270.6 1091.4,307.0" fill="#a39552" fill-opacity="0.45"/>
<polygon points="1019.8,239.9 984.9,223.1 985.8,181.1 1021.5,197.5" fill="#a39552" fill-opacity="0.45"/>
<polygon points="1019.8,239.9 984.9,223.1 985.8,181.1 1021.5,197.5" fill="#a39552" fill-opacity="0.45"/>
<polygon points="918.1,307.6 985.3,270.7 951.6,253.6 884.3,289.1" fill="#e8c21a" fill-opacity="0.45"/>
<polygon points="1089.1,337.3 1134.2,309.0 1137.2,279.1 1091.4,307.0" fill="#b09e4c" fill-opacity="0.45"/>
<line x1="1052.6" y1="318.5" x2="1054.3" y2="288.4" stroke="#000" stroke-width="1.6"/>
<line x1="935.4" y1="298.1" x2="1001.3" y2="262.0" stroke="#000" stroke-width="1.6"/>
<line x1="1002.4" y1="414.9" x2="1003.6" y2="377.0" stroke="#000" stroke-width="1.6"/>
<line x1="901.1" y1="298.3" x2="968.3" y2="262.1" stroke="#000" stroke-width="1.6"/>
<line x1="969.9" y1="435.8" x2="935.9" y2="415.2" stroke="#000" stroke-width="1.6"/>
<line x1="1086.1" y1="376.3" x2="1089.1" y2="337.3" stroke="#000" stroke-width="1.6"/>
<line x1="968.7" y1="231.5" x2="969.2" y2="189.3" stroke="#000" stroke-width="1.6"/>
<line x1="918.5" y1="338.0" x2="869.1" y2="310.0" stroke="#000" stroke-width="1.6"/>
<line x1="1003.6" y1="377.0" x2="968.9" y2="357.5" stroke="#000" stroke-width="1.6"/>
<line x1="1003.6" y1="377.0" x2="968.9" y2="357.5" stroke="#000" stroke-width="1.6"/>
<line x1="1021.5" y1="197.5" x2="1069.2" y2="172.8" stroke="#000" stroke-width="1.6"/>
<line x1="1021.5" y1="197.5" x2="1069.2" y2="172.8" stroke="#000" stroke-width="1.6"/>
<polygon points="901.8,517.3 952.9,483.4 919.7,462.1 868.5,494.8" fill="#c9a514" fill-opacity="0.45"/>
<polygon points="834.9,445.7 803.6,425.0 800.7,387.4 832.5,407.8" fill="#a39552" fill-opacity="0.45"/>
<line x1="969.3" y1="328.2" x2="952.2" y2="318.9" stroke="#000" stroke-width="1.6"/>
<polygon points="1038.4,297.7 1100.3,261.6 1102.8,231.1 1039.9,266.6" fill="#b09e4c" fill-opacity="0.45"/>
<line x1="1089.1" y1="337.3" x2="1052.6" y2="318.5" stroke="#000" stroke-width="1.6"/>
<polygon points="952.6,337.9 1017.5,300.4 1018.6,270.6 952.8,307.5" fill="#b09e4c" fill-opacity="0.45"/>
<polygon points="952.6,337.9 1017.5,300.4 1018.6,270.6 952.8,307.5" fill="#b09e4c" fill-opacity="0.45"/>
<line x1="1144.5" y1="205.5" x2="1069.2" y2="172.8" stroke="#000" stroke-width="1.6"/>
<polygon points="1037.7,189.1 1069.2,172.8 1071.9,129.3 1039.7,145.0" fill="#b09e4c" fill-opacity="0.45"/>
<line x1="1039.7" y1="145.0" x2="968.3" y2="114.6" stroke="#000" stroke-width="1.6"/>
<line x1="1003.6" y1="248.7" x2="968.7" y2="231.5" stroke="#000" stroke-width="1.6"/>
<line x1="1003.6" y1="248.7" x2="968.7" y2="231.5" stroke="#000" stroke-width="1.6"/>
<polygon points="918.5,338.0 984.7,300.5 985.3,270.7 918.1,307.6" fill="#b09e4c" fill-opacity="0.45"/>
<polygon points="868.5,494.8 919.7,462.1 919.2,425.5 866.9,457.8" fill="#b09e4c" fill-opacity="0.45"/>
<line x1="885.3" y1="319.1" x2="884.3" y2="289.1" stroke="#000" stroke-width="1.6"/>
<line x1="885.3" y1="319.1" x2="884.3" y2="289.1" stroke="#000" stroke-width="1.6"/>
<polygon points="1005.2,457.2 1053.3,425.0 1018.1,404.8 969.9,435.8" fill="#c9a514" fill-opacity="0.45"/>
<line x1="918.0" y1="257.9" x2="984.9" y2="223.1" stroke="#000" stroke-width="1.6"/>
<polygon points="884.7,397.2 952.1,357.5 952.2,328.7 883.7,367.9" fill="#b09e4c" fill-opacity="0.45"/>
<polygon points="1075.5,316.7 1137.2,279.1 1100.3,261.6 1038.4,297.7" fill="#c9a514" fill-opacity="0.45"/>
<polygon points="1038.4,297.7 1100.3,261.6 1103.6,220.7 1040.4,255.9" fill="#b09e4c" fill-opacity="0.45"/>
<line x1="797.6" y1="348.3" x2="869.1" y2="310.0" stroke="#000" stroke-width="1.6"/>
<line x1="797.6" y1="348.3" x2="869.1" y2="310.0" stroke="#000" stroke-width="1.6"/>
<line x1="1004.5" y1="347.4" x2="1068.0" y2="309.2" stroke="#000" stroke-width="1.6"/>
<line x1="852.4" y1="483.8" x2="850.9" y2="456.3" stroke="#000" stroke-width="1.6"/>
<polygon points="952.8,307.5 1018.6,270.6 1001.3,262.0 935.4,298.1" fill="#e8c21a" fill-opacity="0.45"/>
<polygon points="1037.7,189.1 1002.1,173.0 1003.3,129.5 1039.7,145.0" fill="#a39552" fill-opacity="0.45"/>
<polygon points="969.9,435.8 1018.1,404.8 1019.7,367.0 970.4,397.5" fill="#b09e4c" fill-opacity="0.45"/>
<line x1="884.3" y1="289.1" x2="868.0" y2="280.1" stroke="#000" stroke-width="1.6"/>
<polygon points="987.9,357.5 1052.6,318.5 1017.5,300.4 952.6,337.9" fill="#c9a514" fill-opacity="0.45"/>
<line x1="987.2" y1="387.1" x2="1035.5" y2="357.2" stroke="#000" stroke-width="1.6"/>
<line x1="832.5" y1="407.8" x2="902.6" y2="367.3" stroke="#000" stroke-width="1.6"/>
<line x1="832.5" y1="407.8" x2="902.6" y2="367.3" stroke="#000" stroke-width="1.6"/>
<line x1="1002.7" y1="279.6" x2="1003.6" y2="248.7" stroke="#000" stroke-width="1.6"/>
<line x1="1002.7" y1="279.6" x2="1003.6" y2="248.7" stroke="#000" stroke-width="1.6"/>
<line x1="1002.7" y1="279.6" x2="1003.6" y2="248.7" stroke="#000" stroke-width="1.6"/>
<line x1="1002.7" y1="279.6" x2="1003.6" y2="248.7" stroke="#000" stroke-width="1.6"/>
<polygon points="901.1,298.3 968.3,262.1 968.7,231.5 900.4,267.1" fill="#b09e4c" fill-opacity="0.45"/>
<line x1="1004.2" y1="357.4" x2="952.2" y2="328.7" stroke="#000" stroke-width="1.6"/>
<line x1="918.5" y1="338.0" x2="885.3" y2="319.1" stroke="#000" stroke-width="1.6"/>
<line x1="918.5" y1="338.0" x2="885.3" y2="319.1" stroke="#000" stroke-width="1.6"/>
<polygon points="1094.7,265.0 1141.3,237.7 1067.3,204.3 1020.2,229.5" fill="#c9a514" fill-opacity="0.45"/>
<line x1="901.8" y1="517.3" x2="969.3" y2="472.5" stroke="#000" stroke-width="1.6"/>
<line x1="1091.4" y1="307.0" x2="1018.6" y2="270.6" stroke="#000" stroke-width="1.6"/>
<polygon points="1003.9,494.1 969.3,472.5 969.9,435.8 1005.2,457.2" fill="#a39552" fill-opacity="0.45"/>
<polygon points="1003.9,494.1 969.3,472.5 969.9,435.8 1005.2,457.2" fill="#a39552" fill-opacity="0.45"/>
<polygon points="1071.4,376.7 1035.5,357.2 1037.4,318.0 1074.1,337.1" fill="#a39552" fill-opacity="0.45"/>
<polygon points="918.5,338.0 869.1,310.0 868.0,280.1 918.1,307.6" fill="#a39552" fill-opacity="0.45"/>
<line x1="1005.2" y1="457.2" x2="1068.8" y2="414.6" stroke="#000" stroke-width="1.6"/>
<line x1="1053.3" y1="425.0" x2="1055.7" y2="386.8" stroke="#000" stroke-width="1.6"/>
<line x1="1091.4" y1="307.0" x2="1137.2" y2="279.1" stroke="#000" stroke-width="1.6"/>
<polygon points="1003.6,377.0 968.9,357.5 969.3,328.2 1004.5,347.4" fill="#a39552" fill-opacity="0.45"/>
<line x1="868.0" y1="280.1" x2="866.3" y2="238.7" stroke="#000" stroke-width="1.6"/>
<line x1="952.7" y1="425.4" x2="952.9" y2="397.0" stroke="#000" stroke-width="1.6"/>
<line x1="1021.5" y1="197.5" x2="985.8" y2="181.1" stroke="#000" stroke-width="1.6"/>
<line x1="1021.5" y1="197.5" x2="985.8" y2="181.1" stroke="#000" stroke-width="1.6"/>
<line x1="952.9" y1="483.4" x2="953.1" y2="446.5" stroke="#000" stroke-width="1.6"/>
<line x1="1038.4" y1="297.7" x2="1002.7" y2="279.6" stroke="#000" stroke-width="1.6"/>
<line x1="1038.4" y1="297.7" x2="1002.7" y2="279.6" stroke="#000" stroke-width="1.6"/>
<line x1="1055.7" y1="386.8" x2="1019.7" y2="367.0" stroke="#000" stroke-width="1.6"/>
<line x1="935.6" y1="338.2" x2="935.4" y2="308.3" stroke="#000" stroke-width="1.6"/>
<line x1="1039.9" y1="266.6" x2="1102.8" y2="231.1" stroke="#000" stroke-width="1.6"/>
<line x1="918.9" y1="367.4" x2="918.5" y2="338.0" stroke="#000" stroke-width="1.6"/>
<line x1="935.0" y1="206.2" x2="1002.1" y2="173.0" stroke="#000" stroke-width="1.6"/>
<polygon points="935.5,317.2 1002.7,279.6 968.3,262.1 901.1,298.3" fill="#c9a514" fill-opacity="0.45"/>
<line x1="901.1" y1="298.3" x2="868.0" y2="280.1" stroke="#000" stroke-width="1.6"/>
<line x1="952.8" y1="307.5" x2="1018.6" y2="270.6" stroke="#000" stroke-width="1.6"/>
<line x1="952.8" y1="307.5" x2="1018.6" y2="270.6" stroke="#000" stroke-width="1.6"/>
<line x1="1019.8" y1="239.9" x2="1021.5" y2="197.5" stroke="#000" stroke-width="1.6"/>
<line x1="1019.8" y1="239.9" x2="1021.5" y2="197.5" stroke="#000" stroke-width="1.6"/>
<line x1="953.1" y1="446.5" x2="919.2" y2="425.5" stroke="#000" stroke-width="1.6"/>
<polygon points="797.6,348.3 869.1,310.0 868.0,280.1 795.2,317.7" fill="#b09e4c" fill-opacity="0.45"/>
<line x1="918.1" y1="307.6" x2="985.3" y2="270.7" stroke="#000" stroke-width="1.6"/>
<polygon points="935.9,428.7 1003.3,386.6 952.1,357.5 884.7,397.2" fill="#c9a514" fill-opacity="0.45"/>
<line x1="1039.7" y1="145.0" x2="1071.9" y2="129.3" stroke="#000" stroke-width="1.6"/>
<polygon points="918.0,257.9 984.9,223.1 985.8,181.1 917.4,215.0" fill="#b09e4c" fill-opacity="0.45"/>
<line x1="901.8" y1="517.3" x2="952.9" y2="483.4" stroke="#000" stroke-width="1.6"/>
<line x1="952.6" y1="337.9" x2="935.5" y2="328.3" stroke="#000" stroke-width="1.6"/>
<line x1="883.7" y1="367.9" x2="952.2" y2="328.7" stroke="#000" stroke-width="1.6"/>
<line x1="800.7" y1="387.4" x2="797.6" y2="348.3" stroke="#000" stroke-width="1.6"/>
<line x1="1020.2" y1="229.5" x2="1021.5" y2="197.5" stroke="#000" stroke-width="1.6"/>
<polygon points="918.5,338.0 885.3,319.1 884.3,289.1 918.1,307.6" fill="#a39552" fill-opacity="0.45"/>
<line x1="1005.2" y1="457.2" x2="1053.3" y2="425.0" stroke="#000" stroke-width="1.6"/>
<polygon points="952.9,276.2 1019.8,239.9 984.9,223.1 918.0,257.9" fill="#c9a514" fill-opacity="0.45"/>
<line x1="832.5" y1="407.8" x2="800.7" y2="387.4" stroke="#000" stroke-width="1.6"/>
<line x1="832.5" y1="407.8" x2="800.7" y2="387.4" stroke="#000" stroke-width="1.6"/>
<line x1="834.9" y1="445.7" x2="832.5" y2="407.8" stroke="#000" stroke-width="1.6"/>
<line x1="1039.7" y1="145.0" x2="1003.3" y2="129.5" stroke="#000" stroke-width="1.6"/>
<line x1="1003.3" y1="386.6" x2="1004.2" y2="357.4" stroke="#000" stroke-width="1.6"/>
<line x1="1075.5" y1="316.7" x2="1137.2" y2="279.1" stroke="#000" stroke-width="1.6"/>
<line x1="1040.4" y1="255.9" x2="1103.6" y2="220.7" stroke="#000" stroke-width="1.6"/>
<polygon points="1023.2,407.8 1071.4,376.7 1035.5,357.2 987.2,387.1" fill="#c9a514" fill-opacity="0.45"/>
<line x1="935.5" y1="328.3" x2="935.4" y2="298.1" stroke="#000" stroke-width="1.6"/>
<line x1="900.4" y1="267.1" x2="968.7" y2="231.5" stroke="#000" stroke-width="1.6"/>
<line x1="1141.3" y1="237.7" x2="1144.5" y2="205.5" stroke="#000" stroke-width="1.6"/>
<polygon points="830.1,368.3 901.7,328.5 869.1,310.0 797.6,348.3" fill="#e8c21a" fill-opacity="0.45"/>
<line x1="1020.2" y1="229.5" x2="1021.9" y2="186.6" stroke="#000" stroke-width="1.6"/>
<polygon points="987.2,387.1 1035.5,357.2 1037.4,318.0 988.1,347.4" fill="#b09e4c" fill-opacity="0.45"/>
<line x1="866.9" y1="457.8" x2="919.2" y2="425.5" stroke="#000" stroke-width="1.6"/>
<line x1="1005.2" y1="457.2" x2="952.7" y2="425.4" stroke="#000" stroke-width="1.6"/>
<polygon points="832.5,407.8 902.6,367.3 901.7,328.5 830.1,368.3" fill="#b09e4c" fill-opacity="0.45"/>
<polygon points="1038.4,297.7 1002.7,279.6 1003.6,248.7 1039.9,266.6" fill="#a39552" fill-opacity="0.45"/>
<polygon points="1038.4,297.7 1002.7,279.6 1003.6,248.7 1039.9,266.6" fill="#a39552" fill-opacity="0.45"/>
<line x1="987.9" y1="357.5" x2="1052.6" y2="318.5" stroke="#000" stroke-width="1.6"/>
<line x1="1037.7" y1="189.1" x2="1039.7" y2="145.0" stroke="#000" stroke-width="1.6"/>
<line x1="1037.7" y1="189.1" x2="1039.7" y2="145.0" stroke="#000" stroke-width="1.6"/>
<polygon points="936.4,540.7 1003.9,494.1 969.3,472.5 901.8,517.3" fill="#c9a514" fill-opacity="0.45"/>
<line x1="918.1" y1="307.6" x2="868.0" y2="280.1" stroke="#000" stroke-width="1.6"/>
<line x1="901.8" y1="517.3" x2="868.5" y2="494.8" stroke="#000" stroke-width="1.6"/>
<line x1="970.4" y1="397.5" x2="1019.7" y2="367.0" stroke="#000" stroke-width="1.6"/>
<line x1="1004.5" y1="347.4" x2="969.3" y2="328.2" stroke="#000" stroke-width="1.6"/>
<polygon points="935.0,206.2 1002.1,173.0 1003.3,129.5 934.8,161.7" fill="#b09e4c" fill-opacity="0.45"/>
<line x1="987.6" y1="367.5" x2="935.6" y2="338.2" stroke="#000" stroke-width="1.6"/>
<line x1="868.5" y1="494.8" x2="866.9" y2="457.8" stroke="#000" stroke-width="1.6"/>
<line x1="1003.9" y1="494.1" x2="1005.2" y2="457.2" stroke="#000" stroke-width="1.6"/>
<line x1="1003.9" y1="494.1" x2="1005.2" y2="457.2" stroke="#000" stroke-width="1.6"/>
<line x1="1071.4" y1="376.7" x2="1074.1" y2="337.1" stroke="#000" stroke-width="1.6"/>
<line x1="987.3" y1="247.1" x2="1020.2" y2="229.5" stroke="#000" stroke-width="1.6"/>
<polygon points="901.8,517.3 969.3,472.5 969.9,435.8 900.9,480.1" fill="#b09e4c" fill-opacity="0.45"/>
<line x1="1089.1" y1="337.3" x2="1091.4" y2="307.0" stroke="#000" stroke-width="1.6"/>
<line x1="1074.1" y1="337.1" x2="1037.4" y2="318.0" stroke="#000" stroke-width="1.6"/>
<polygon points="952.6,337.9 935.5,328.3 935.4,298.1 952.8,307.5" fill="#a39552" fill-opacity="0.45"/>
<line x1="1003.6" y1="377.0" x2="1004.5" y2="347.4" stroke="#000" stroke-width="1.6"/>
<line x1="795.2" y1="317.7" x2="868.0" y2="280.1" stroke="#000" stroke-width="1.6"/>
<line x1="795.2" y1="317.7" x2="868.0" y2="280.1" stroke="#000" stroke-width="1.6"/>
<polygon points="901.1,298.3 868.0,280.1 866.3,238.7 900.1,256.5" fill="#a39552" fill-opacity="0.45"/>
<polygon points="988.6,326.8 1054.3,288.4 1018.6,270.6 952.8,307.5" fill="#e8c21a" fill-opacity="0.45"/>
<polygon points="970.7,223.6 1037.7,189.1 1002.1,173.0 935.0,206.2" fill="#c9a514" fill-opacity="0.45"/>
<line x1="1005.2" y1="457.2" x2="969.9" y2="435.8" stroke="#000" stroke-width="1.6"/>
<line x1="1005.2" y1="457.2" x2="969.9" y2="435.8" stroke="#000" stroke-width="1.6"/>
<line x1="1005.2" y1="457.2" x2="969.9" y2="435.8" stroke="#000" stroke-width="1.6"/>
<polygon points="846.9,378.6 918.5,338.0 869.1,310.0 797.6,348.3" fill="#c9a514" fill-opacity="0.45"/>
<polygon points="1097.2,232.2 1144.5,205.5 1069.2,172.8 1021.5,197.5" fill="#e8c21a" fill-opacity="0.45"/>
<line x1="883.7" y1="468.8" x2="952.7" y2="425.4" stroke="#000" stroke-width="1.6"/>
<line x1="917.4" y1="215.0" x2="985.8" y2="181.1" stroke="#000" stroke-width="1.6"/>
<line x1="969.9" y1="435.8" x2="970.4" y2="397.5" stroke="#000" stroke-width="1.6"/>
<line x1="918.1" y1="307.6" x2="884.3" y2="289.1" stroke="#000" stroke-width="1.6"/>
<line x1="935.5" y1="317.2" x2="1002.7" y2="279.6" stroke="#000" stroke-width="1.6"/>
<line x1="935.5" y1="317.2" x2="1002.7" y2="279.6" stroke="#000" stroke-width="1.6"/>
<polygon points="987.9,357.5 1052.6,318.5 1054.3,288.4 988.6,326.8" fill="#b09e4c" fill-opacity="0.45"/>
<line x1="865.7" y1="378.2" x2="935.6" y2="338.2" stroke="#000" stroke-width="1.6"/>
<polygon points="1005.2,457.2 952.7,425.4 952.9,397.0 1006.2,428.4" fill="#a39552" fill-opacity="0.45"/>
<polygon points="1075.5,316.7 1137.2,279.1 1141.3,237.7 1078.5,274.4" fill="#b09e4c" fill-opacity="0.45"/>
<polygon points="1078.5,274.4 1141.3,237.7 1103.6,220.7 1040.4,255.9" fill="#e8c21a" fill-opacity="0.45"/>
<polygon points="901.8,517.3 952.9,483.4 953.1,446.5 900.9,480.1" fill="#b09e4c" fill-opacity="0.45"/>
<polygon points="832.5,407.8 800.7,387.4 797.6,348.3 830.1,368.3" fill="#a39552" fill-opacity="0.45"/>
<line x1="1039.9" y1="266.6" x2="1003.6" y2="248.7" stroke="#000" stroke-width="1.6"/>
<line x1="1039.9" y1="266.6" x2="1003.6" y2="248.7" stroke="#000" stroke-width="1.6"/>
<polygon points="1005.2,457.2 1053.3,425.0 1055.7,386.8 1006.5,418.6" fill="#b09e4c" fill-opacity="0.45"/>
<polygon points="987.6,367.5 935.6,338.2 935.4,308.3 988.4,337.1" fill="#a39552" fill-opacity="0.45"/>
<line x1="1023.2" y1="407.8" x2="1071.4" y2="376.7" stroke="#000" stroke-width="1.6"/>
<polygon points="935.3,285.7 1003.6,248.7 968.7,231.5 900.4,267.1" fill="#e8c21a" fill-opacity="0.45"/>
<polygon points="900.9,480.1 953.1,446.5 919.2,425.5 866.9,457.8" fill="#e8c21a" fill-opacity="0.45"/>
<line x1="884.7" y1="397.2" x2="883.7" y2="367.9" stroke="#000" stroke-width="1.6"/>
<line x1="866.3" y1="238.7" x2="865.1" y2="206.5" stroke="#000" stroke-width="1.6"/>
<line x1="952.9" y1="276.2" x2="1019.8" y2="239.9" stroke="#000" stroke-width="1.6"/>
<line x1="918.5" y1="338.0" x2="918.1" y2="307.6" stroke="#000" stroke-width="1.6"/>
<line x1="918.5" y1="338.0" x2="918.1" y2="307.6" stroke="#000" stroke-width="1.6"/>
<line x1="952.6" y1="337.9" x2="952.8" y2="307.5" stroke="#000" stroke-width="1.6"/>
<line x1="952.6" y1="337.9" x2="952.8" y2="307.5" stroke="#000" stroke-width="1.6"/>
<polygon points="1006.5,418.6 1055.7,386.8 1019.7,367.0 970.4,397.5" fill="#e8c21a" fill-opacity="0.45"/>
<polygon points="987.3,247.1 1020.2,229.5 1021.9,186.6 988.2,203.7" fill="#b09e4c" fill-opacity="0.45"/>
<line x1="936.4" y1="540.7" x2="1003.9" y2="494.1" stroke="#000" stroke-width="1.6"/>
<line x1="1094.7" y1="265.0" x2="1020.2" y2="229.5" stroke="#000" stroke-width="1.6"/>
<line x1="1094.7" y1="265.0" x2="1020.2" y2="229.5" stroke="#000" stroke-width="1.6"/>
<line x1="988.1" y1="347.4" x2="1037.4" y2="318.0" stroke="#000" stroke-width="1.6"/>
<line x1="1038.4" y1="297.7" x2="1039.9" y2="266.6" stroke="#000" stroke-width="1.6"/>
<line x1="1038.4" y1="297.7" x2="1039.9" y2="266.6" stroke="#000" stroke-width="1.6"/>
<line x1="934.8" y1="161.7" x2="1003.3" y2="129.5" stroke="#000" stroke-width="1.6"/>
<line x1="830.1" y1="368.3" x2="901.7" y2="328.5" stroke="#000" stroke-width="1.6"/>
<line x1="1094.7" y1="265.0" x2="1141.3" y2="237.7" stroke="#000" stroke-width="1.6"/>
<line x1="935.9" y1="428.7" x2="1003.3" y2="386.6" stroke="#000" stroke-width="1.6"/>
<polygon points="901.8,517.3 868.5,494.8 866.9,457.8 900.9,480.1" fill="#a39552" fill-opacity="0.45"/>
<polygon points="935.8,399.0 1004.2,357.4 952.2,328.7 883.7,367.9" fill="#e8c21a" fill-opacity="0.45"/>
<line x1="952.8" y1="307.5" x2="935.4" y2="298.1" stroke="#000" stroke-width="1.6"/>
<line x1="987.9" y1="357.5" x2="952.6" y2="337.9" stroke="#000" stroke-width="1.6"/>
<polygon points="795.2,317.7 868.0,280.1 866.3,238.7 792.0,275.5" fill="#b09e4c" fill-opacity="0.45"/>
<polygon points="935.5,317.2 1002.7,279.6 1003.6,248.7 935.3,285.7" fill="#b09e4c" fill-opacity="0.45"/>
<polygon points="935.5,317.2 1002.7,279.6 1003.6,248.7 935.3,285.7" fill="#b09e4c" fill-opacity="0.45"/>
<polygon points="883.7,468.8 952.7,425.4 952.9,397.0 882.8,439.9" fill="#b09e4c" fill-opacity="0.45"/>
<line x1="1075.5" y1="316.7" x2="1038.4" y2="297.7" stroke="#000" stroke-width="1.6"/>
<line x1="1038.4" y1="297.7" x2="1040.4" y2="255.9" stroke="#000" stroke-width="1.6"/>
<line x1="901.1" y1="298.3" x2="900.4" y2="267.1" stroke="#000" stroke-width="1.6"/>
<polygon points="865.7,378.2 935.6,338.2 935.4,308.3 864.5,347.7" fill="#b09e4c" fill-opacity="0.45"/>
<line x1="900.1" y1="256.5" x2="866.3" y2="238.7" stroke="#000" stroke-width="1.6"/>
<polygon points="828.2,337.5 901.1,298.3 868.0,280.1 795.2,317.7" fill="#c9a514" fill-opacity="0.45"/>
<polygon points="1005.2,457.2 969.9,435.8 970.4,397.5 1006.5,418.6" fill="#a39552" fill-opacity="0.45"/>
<line x1="900.9" y1="480.1" x2="969.9" y2="435.8" stroke="#000" stroke-width="1.6"/>
<line x1="797.6" y1="348.3" x2="795.2" y2="317.7" stroke="#000" stroke-width="1.6"/>
<line x1="988.6" y1="326.8" x2="1054.3" y2="288.4" stroke="#000" stroke-width="1.6"/>
<polygon points="971.3,336.9 1038.4,297.7 1002.7,279.6 935.5,317.2" fill="#c9a514" fill-opacity="0.45"/>
<line x1="901.1" y1="298.3" x2="900.1" y2="256.5" stroke="#000" stroke-width="1.6"/>
<line x1="970.7" y1="223.6" x2="1037.7" y2="189.1" stroke="#000" stroke-width="1.6"/>
<polygon points="953.1,232.7 1021.5,197.5 985.8,181.1 917.4,215.0" fill="#e8c21a" fill-opacity="0.45"/>
<line x1="1023.2" y1="407.8" x2="987.2" y2="387.1" stroke="#000" stroke-width="1.6"/>
<line x1="1006.2" y1="428.4" x2="952.9" y2="397.0" stroke="#000" stroke-width="1.6"/>
<polygon points="1094.7,265.0 1020.2,229.5 1021.5,197.5 1097.2,232.2" fill="#a39552" fill-opacity="0.45"/>
<line x1="935.9" y1="428.7" x2="884.7" y2="397.2" stroke="#000" stroke-width="1.6"/>
<line x1="987.2" y1="387.1" x2="988.1" y2="347.4" stroke="#000" stroke-width="1.6"/>
<line x1="935.5" y1="317.2" x2="901.1" y2="298.3" stroke="#000" stroke-width="1.6"/>
<polygon points="1094.7,265.0 1141.3,237.7 1144.5,205.5 1097.2,232.2" fill="#b09e4c" fill-opacity="0.45"/>
<line x1="988.4" y1="337.1" x2="935.4" y2="308.3" stroke="#000" stroke-width="1.6"/>
<line x1="1078.5" y1="274.4" x2="1141.3" y2="237.7" stroke="#000" stroke-width="1.6"/>
<polygon points="952.9,276.2 1019.8,239.9 1021.5,197.5 953.1,232.7" fill="#b09e4c" fill-opacity="0.45"/>
<polygon points="1023.2,407.8 1071.4,376.7 1074.1,337.1 1025.0,367.7" fill="#b09e4c" fill-opacity="0.45"/>
<polygon points="935.9,428.7 1003.3,386.6 1004.2,357.4 935.8,399.0" fill="#b09e4c" fill-opacity="0.45"/>
<polygon points="1094.7,265.0 1020.2,229.5 1021.9,186.6 1098.1,221.1" fill="#a39552" fill-opacity="0.45"/>
<polygon points="987.9,357.5 952.6,337.9 952.8,307.5 988.6,326.8" fill="#a39552" fill-opacity="0.45"/>
<line x1="830.1" y1="368.3" x2="797.6" y2="348.3" stroke="#000" stroke-width="1.6"/>
<polygon points="936.3,503.3 1005.2,457.2 952.7,425.4 883.7,468.8" fill="#c9a514" fill-opacity="0.45"/>
<line x1="918.0" y1="257.9" x2="917.4" y2="215.0" stroke="#000" stroke-width="1.6"/>
<line x1="917.5" y1="265.6" x2="866.3" y2="238.7" stroke="#000" stroke-width="1.6"/>
<polygon points="1025.0,367.7 1074.1,337.1 1037.4,318.0 988.1,347.4" fill="#e8c21a" fill-opacity="0.45"/>
<line x1="832.5" y1="407.8" x2="830.1" y2="368.3" stroke="#000" stroke-width="1.6"/>
<polygon points="845.2,347.6 918.1,307.6 868.0,280.1 795.2,317.7" fill="#e8c21a" fill-opacity="0.45"/>
<line x1="900.9" y1="480.1" x2="953.1" y2="446.5" stroke="#000" stroke-width="1.6"/>
<line x1="1006.5" y1="418.6" x2="1055.7" y2="386.8" stroke="#000" stroke-width="1.6"/>
<line x1="988.2" y1="203.7" x2="1021.9" y2="186.6" stroke="#000" stroke-width="1.6"/>
<line x1="936.4" y1="540.7" x2="901.8" y2="517.3" stroke="#000" stroke-width="1.6"/>
<line x1="935.3" y1="285.7" x2="1003.6" y2="248.7" stroke="#000" stroke-width="1.6"/>
<line x1="935.3" y1="285.7" x2="1003.6" y2="248.7" stroke="#000" stroke-width="1.6"/>
<line x1="952.9" y1="276.2" x2="918.0" y2="257.9" stroke="#000" stroke-width="1.6"/>
<polygon points="971.4,178.5 1039.7,145.0 1003.3,129.5 934.8,161.7" fill="#e8c21a" fill-opacity="0.45"/>
<polygon points="936.4,540.7 1003.9,494.1 1005.2,457.2 936.3,503.3" fill="#b09e4c" fill-opacity="0.45"/>
<polygon points="1061.9,284.1 1094.7,265.0 1020.2,229.5 987.3,247.1" fill="#c9a514" fill-opacity="0.45"/>
<line x1="882.8" y1="439.9" x2="952.9" y2="397.0" stroke="#000" stroke-width="1.6"/>
<line x1="918.2" y1="317.9" x2="917.7" y2="276.3" stroke="#000" stroke-width="1.6"/>
<polygon points="917.8,409.9 987.6,367.5 935.6,338.2 865.7,378.2" fill="#c9a514" fill-opacity="0.45"/>
<polygon points="1075.5,316.7 1038.4,297.7 1040.4,255.9 1078.5,274.4" fill="#a39552" fill-opacity="0.45"/>
<line x1="846.9" y1="378.6" x2="918.5" y2="338.0" stroke="#000" stroke-width="1.6"/>
<line x1="1005.2" y1="457.2" x2="1006.2" y2="428.4" stroke="#000" stroke-width="1.6"/>
<line x1="864.5" y1="347.7" x2="935.4" y2="308.3" stroke="#000" stroke-width="1.6"/>
<line x1="882.7" y1="337.6" x2="918.2" y2="317.9" stroke="#000" stroke-width="1.6"/>
<line x1="901.8" y1="517.3" x2="900.9" y2="480.1" stroke="#000" stroke-width="1.6"/>
<line x1="901.8" y1="517.3" x2="900.9" y2="480.1" stroke="#000" stroke-width="1.6"/>
<line x1="792.0" y1="275.5" x2="866.3" y2="238.7" stroke="#000" stroke-width="1.6"/>
<line x1="792.0" y1="275.5" x2="866.3" y2="238.7" stroke="#000" stroke-width="1.6"/>
<line x1="987.3" y1="247.1" x2="988.2" y2="203.7" stroke="#000" stroke-width="1.6"/>
<polygon points="935.5,317.2 901.1,298.3 900.4,267.1 935.3,285.7" fill="#a39552" fill-opacity="0.45"/>
<polygon points="970.7,223.6 1037.7,189.1 1039.7,145.0 971.4,178.5" fill="#b09e4c" fill-opacity="0.45"/>
<polygon points="936.3,503.3 1005.2,457.2 969.9,435.8 900.9,480.1" fill="#e8c21a" fill-opacity="0.45"/>
<polygon points="935.9,428.7 884.7,397.2 883.7,367.9 935.8,399.0" fill="#a39552" fill-opacity="0.45"/>
<line x1="900.9" y1="480.1" x2="866.9" y2="457.8" stroke="#000" stroke-width="1.6"/>
<line x1="1097.2" y1="232.2" x2="1021.5" y2="197.5" stroke="#000" stroke-width="1.6"/>
<line x1="846.9" y1="378.6" x2="797.6" y2="348.3" stroke="#000" stroke-width="1.6"/>
<line x1="1097.2" y1="232.2" x2="1144.5" y2="205.5" stroke="#000" stroke-width="1.6"/>
<line x1="987.6" y1="367.5" x2="988.4" y2="337.1" stroke="#000" stroke-width="1.6"/>
<line x1="1005.2" y1="457.2" x2="1006.5" y2="418.6" stroke="#000" stroke-width="1.6"/>
<polygon points="917.5,265.6 866.3,238.7 865.1,206.5 917.1,232.9" fill="#a39552" fill-opacity="0.45"/>
<line x1="935.0" y1="206.2" x2="934.8" y2="161.7" stroke="#000" stroke-width="1.6"/>
<polygon points="1023.2,407.8 987.2,387.1 988.1,347.4 1025.0,367.7" fill="#a39552" fill-opacity="0.45"/>
<line x1="828.2" y1="337.5" x2="901.1" y2="298.3" stroke="#000" stroke-width="1.6"/>
<line x1="971.3" y1="336.9" x2="1038.4" y2="297.7" stroke="#000" stroke-width="1.6"/>
<line x1="1006.5" y1="418.6" x2="970.4" y2="397.5" stroke="#000" stroke-width="1.6"/>
<line x1="988.6" y1="326.8" x2="952.8" y2="307.5" stroke="#000" stroke-width="1.6"/>
<line x1="953.1" y1="232.7" x2="1021.5" y2="197.5" stroke="#000" stroke-width="1.6"/>
<line x1="935.8" y1="399.0" x2="1004.2" y2="357.4" stroke="#000" stroke-width="1.6"/>
<line x1="970.7" y1="223.6" x2="935.0" y2="206.2" stroke="#000" stroke-width="1.6"/>
<line x1="1098.1" y1="221.1" x2="1021.9" y2="186.6" stroke="#000" stroke-width="1.6"/>
<polygon points="792.0,275.5 866.3,238.7 865.1,206.5 789.4,242.5" fill="#b09e4c" fill-opacity="0.45"/>
<polygon points="846.9,378.6 918.5,338.0 918.1,307.6 845.2,347.6" fill="#b09e4c" fill-opacity="0.45"/>
<polygon points="952.9,276.2 918.0,257.9 917.4,215.0 953.1,232.7" fill="#a39552" fill-opacity="0.45"/>
<line x1="1025.0" y1="367.7" x2="1074.1" y2="337.1" stroke="#000" stroke-width="1.6"/>
<line x1="987.9" y1="357.5" x2="988.6" y2="326.8" stroke="#000" stroke-width="1.6"/>
<polygon points="971.8,305.1 1039.9,266.6 1003.6,248.7 935.3,285.7" fill="#e8c21a" fill-opacity="0.45"/>
<polygon points="936.4,540.7 901.8,517.3 900.9,480.1 936.3,503.3" fill="#a39552" fill-opacity="0.45"/>
<polygon points="882.7,337.6 918.2,317.9 917.7,276.3 881.4,295.6" fill="#b09e4c" fill-opacity="0.45"/>
<polygon points="846.9,378.6 797.6,348.3 795.2,317.7 845.2,347.6" fill="#a39552" fill-opacity="0.45"/>
<line x1="935.3" y1="285.7" x2="900.4" y2="267.1" stroke="#000" stroke-width="1.6"/>
<line x1="795.2" y1="317.7" x2="792.0" y2="275.5" stroke="#000" stroke-width="1.6"/>
<line x1="1075.5" y1="316.7" x2="1078.5" y2="274.4" stroke="#000" stroke-width="1.6"/>
<line x1="1078.5" y1="274.4" x2="1040.4" y2="255.9" stroke="#000" stroke-width="1.6"/>
<line x1="883.7" y1="468.8" x2="882.8" y2="439.9" stroke="#000" stroke-width="1.6"/>
<line x1="971.4" y1="178.5" x2="1039.7" y2="145.0" stroke="#000" stroke-width="1.6"/>
<polygon points="971.3,336.9 1038.4,297.7 1039.9,266.6 971.8,305.1" fill="#b09e4c" fill-opacity="0.45"/>
<line x1="935.8" y1="399.0" x2="883.7" y2="367.9" stroke="#000" stroke-width="1.6"/>
<line x1="989.5" y1="357.5" x2="918.2" y2="317.9" stroke="#000" stroke-width="1.6"/>
<line x1="917.1" y1="232.9" x2="865.1" y2="206.5" stroke="#000" stroke-width="1.6"/>
<polygon points="825.6,294.8 900.1,256.5 866.3,238.7 792.0,275.5" fill="#e8c21a" fill-opacity="0.45"/>
<line x1="936.3" y1="503.3" x2="1005.2" y2="457.2" stroke="#000" stroke-width="1.6"/>
<line x1="936.3" y1="503.3" x2="1005.2" y2="457.2" stroke="#000" stroke-width="1.6"/>
<line x1="828.2" y1="337.5" x2="795.2" y2="317.7" stroke="#000" stroke-width="1.6"/>
<line x1="1061.9" y1="284.1" x2="987.3" y2="247.1" stroke="#000" stroke-width="1.6"/>
<line x1="865.7" y1="378.2" x2="864.5" y2="347.7" stroke="#000" stroke-width="1.6"/>
<line x1="935.5" y1="317.2" x2="935.3" y2="285.7" stroke="#000" stroke-width="1.6"/>
<line x1="935.5" y1="317.2" x2="935.3" y2="285.7" stroke="#000" stroke-width="1.6"/>
<polygon points="828.2,337.5 901.1,298.3 900.1,256.5 825.6,294.8" fill="#b09e4c" fill-opacity="0.45"/>
<polygon points="970.7,223.6 935.0,206.2 934.8,161.7 971.4,178.5" fill="#a39552" fill-opacity="0.45"/>
<polygon points="936.1,474.0 1006.2,428.4 952.9,397.0 882.8,439.9" fill="#e8c21a" fill-opacity="0.45"/>
<line x1="1023.2" y1="407.8" x2="1025.0" y2="367.7" stroke="#000" stroke-width="1.6"/>
<line x1="789.4" y1="242.5" x2="865.1" y2="206.5" stroke="#000" stroke-width="1.6"/>
<line x1="1094.7" y1="265.0" x2="1097.2" y2="232.2" stroke="#000" stroke-width="1.6"/>
<line x1="1025.0" y1="367.7" x2="988.1" y2="347.4" stroke="#000" stroke-width="1.6"/>
<polygon points="917.4,379.0 988.4,337.1 935.4,308.3 864.5,347.7" fill="#e8c21a" fill-opacity="0.45"/>
<line x1="845.2" y1="347.6" x2="918.1" y2="307.6" stroke="#000" stroke-width="1.6"/>
<line x1="917.8" y1="409.9" x2="987.6" y2="367.5" stroke="#000" stroke-width="1.6"/>
<line x1="971.3" y1="336.9" x2="935.5" y2="317.2" stroke="#000" stroke-width="1.6"/>
<line x1="952.9" y1="276.2" x2="953.1" y2="243.8" stroke="#000" stroke-width="1.6"/>
<line x1="1094.7" y1="265.0" x2="1098.1" y2="221.1" stroke="#000" stroke-width="1.6"/>
<line x1="936.3" y1="503.3" x2="883.7" y2="468.8" stroke="#000" stroke-width="1.6"/>
<line x1="953.1" y1="232.7" x2="917.4" y2="215.0" stroke="#000" stroke-width="1.6"/>
<polygon points="843.0,304.7 917.5,265.6 866.3,238.7 792.0,275.5" fill="#c9a514" fill-opacity="0.45"/>
<polygon points="1064.6,239.7 1098.1,221.1 1021.9,186.6 988.2,203.7" fill="#e8c21a" fill-opacity="0.45"/>
<line x1="845.2" y1="347.6" x2="795.2" y2="317.7" stroke="#000" stroke-width="1.6"/>
<line x1="935.9" y1="428.7" x2="935.8" y2="399.0" stroke="#000" stroke-width="1.6"/>
<line x1="952.9" y1="276.2" x2="953.1" y2="232.7" stroke="#000" stroke-width="1.6"/>
<line x1="971.8" y1="305.1" x2="1039.9" y2="266.6" stroke="#000" stroke-width="1.6"/>
<line x1="936.4" y1="540.7" x2="936.3" y2="503.3" stroke="#000" stroke-width="1.6"/>
<line x1="1061.9" y1="284.1" x2="1094.7" y2="265.0" stroke="#000" stroke-width="1.6"/>
<polygon points="936.3,503.3 1005.2,457.2 1006.2,428.4 936.1,474.0" fill="#b09e4c" fill-opacity="0.45"/>
<line x1="881.4" y1="295.6" x2="917.7" y2="276.3" stroke="#000" stroke-width="1.6"/>
<polygon points="989.5,357.5 918.2,317.9 917.7,276.3 990.6,315.1" fill="#a39552" fill-opacity="0.45"/>
<line x1="882.7" y1="337.6" x2="881.4" y2="295.6" stroke="#000" stroke-width="1.6"/>
<polygon points="1061.9,284.1 987.3,247.1 988.2,203.7 1064.6,239.7" fill="#a39552" fill-opacity="0.45"/>
<polygon points="954.1,378.9 989.5,357.5 918.2,317.9 882.7,337.6" fill="#c9a514" fill-opacity="0.45"/>
<line x1="917.8" y1="409.9" x2="865.7" y2="378.2" stroke="#000" stroke-width="1.6"/>
<line x1="917.5" y1="265.6" x2="917.1" y2="232.9" stroke="#000" stroke-width="1.6"/>
<polygon points="828.2,337.5 795.2,317.7 792.0,275.5 825.6,294.8" fill="#a39552" fill-opacity="0.45"/>
<line x1="936.3" y1="503.3" x2="900.9" y2="480.1" stroke="#000" stroke-width="1.6"/>
<polygon points="971.3,336.9 935.5,317.2 935.3,285.7 971.8,305.1" fill="#a39552" fill-opacity="0.45"/>
<line x1="971.4" y1="178.5" x2="934.8" y2="161.7" stroke="#000" stroke-width="1.6"/>
<polygon points="917.8,409.9 987.6,367.5 988.4,337.1 917.4,379.0" fill="#b09e4c" fill-opacity="0.45"/>
<line x1="825.6" y1="294.8" x2="900.1" y2="256.5" stroke="#000" stroke-width="1.6"/>
<polygon points="936.3,503.3 883.7,468.8 882.8,439.9 936.1,474.0" fill="#a39552" fill-opacity="0.45"/>
<line x1="970.7" y1="223.6" x2="971.4" y2="178.5" stroke="#000" stroke-width="1.6"/>
<line x1="899.0" y1="305.4" x2="952.9" y2="276.2" stroke="#000" stroke-width="1.6"/>
<line x1="792.0" y1="275.5" x2="789.4" y2="242.5" stroke="#000" stroke-width="1.6"/>
<line x1="846.9" y1="378.6" x2="845.2" y2="347.6" stroke="#000" stroke-width="1.6"/>
<polygon points="917.8,409.9 865.7,378.2 864.5,347.7 917.4,379.0" fill="#a39552" fill-opacity="0.45"/>
<polygon points="1061.9,284.1 1094.7,265.0 1098.1,221.1 1064.6,239.7" fill="#b09e4c" fill-opacity="0.45"/>
<line x1="936.1" y1="474.0" x2="1006.2" y2="428.4" stroke="#000" stroke-width="1.6"/>
<line x1="1027.3" y1="314.9" x2="952.9" y2="276.2" stroke="#000" stroke-width="1.6"/>
<line x1="1064.6" y1="239.7" x2="988.2" y2="203.7" stroke="#000" stroke-width="1.6"/>
<line x1="990.6" y1="315.1" x2="917.7" y2="276.3" stroke="#000" stroke-width="1.6"/>
<line x1="971.8" y1="305.1" x2="935.3" y2="285.7" stroke="#000" stroke-width="1.6"/>
<polygon points="841.2,271.2 917.1,232.9 865.1,206.5 789.4,242.5" fill="#e8c21a" fill-opacity="0.45"/>
<line x1="825.6" y1="294.8" x2="792.0" y2="275.5" stroke="#000" stroke-width="1.6"/>
<line x1="954.1" y1="378.9" x2="882.7" y2="337.6" stroke="#000" stroke-width="1.6"/>
<line x1="917.4" y1="379.0" x2="988.4" y2="337.1" stroke="#000" stroke-width="1.6"/>
<polygon points="899.0,305.4 952.9,276.2 953.1,243.8 898.3,272.4" fill="#b09e4c" fill-opacity="0.45"/>
<line x1="828.2" y1="337.5" x2="825.6" y2="294.8" stroke="#000" stroke-width="1.6"/>
<line x1="971.3" y1="336.9" x2="971.8" y2="305.1" stroke="#000" stroke-width="1.6"/>
<line x1="936.1" y1="474.0" x2="882.8" y2="439.9" stroke="#000" stroke-width="1.6"/>
<line x1="843.0" y1="304.7" x2="917.5" y2="265.6" stroke="#000" stroke-width="1.6"/>
<polygon points="1027.3,314.9 952.9,276.2 953.1,243.8 1028.7,281.8" fill="#a39552" fill-opacity="0.45"/>
<line x1="917.4" y1="379.0" x2="864.5" y2="347.7" stroke="#000" stroke-width="1.6"/>
<line x1="843.0" y1="304.7" x2="792.0" y2="275.5" stroke="#000" stroke-width="1.6"/>
<line x1="1064.6" y1="239.7" x2="1098.1" y2="221.1" stroke="#000" stroke-width="1.6"/>
<line x1="898.3" y1="272.4" x2="953.1" y2="243.8" stroke="#000" stroke-width="1.6"/>
<line x1="936.3" y1="503.3" x2="936.1" y2="474.0" stroke="#000" stroke-width="1.6"/>
<polygon points="954.3,336.0 990.6,315.1 917.7,276.3 881.4,295.6" fill="#e8c21a" fill-opacity="0.45"/>
<line x1="1061.9" y1="284.1" x2="1064.6" y2="239.7" stroke="#000" stroke-width="1.6"/>
<polygon points="954.1,378.9 882.7,337.6 881.4,295.6 954.3,336.0" fill="#a39552" fill-opacity="0.45"/>
<polygon points="843.0,304.7 917.5,265.6 917.1,232.9 841.2,271.2" fill="#b09e4c" fill-opacity="0.45"/>
<line x1="989.5" y1="357.5" x2="990.6" y2="315.1" stroke="#000" stroke-width="1.6"/>
<line x1="954.1" y1="378.9" x2="989.5" y2="357.5" stroke="#000" stroke-width="1.6"/>
<line x1="1007.6" y1="252.9" x2="1009.1" y2="207.7" stroke="#000" stroke-width="7" stroke-linecap="square"/>
<line x1="1046.2" y1="271.9" x2="1007.6" y2="252.9" stroke="#000" stroke-width="7" stroke-linecap="square"/>
<polygon points="843.0,304.7 792.0,275.5 789.4,242.5 841.2,271.2" fill="#a39552" fill-opacity="0.45"/>
<line x1="917.8" y1="409.9" x2="917.4" y2="379.0" stroke="#000" stroke-width="1.6"/>
<line x1="1028.7" y1="281.8" x2="953.1" y2="243.8" stroke="#000" stroke-width="1.6"/>
<polygon points="973.5,346.7 1027.3,314.9 952.9,276.2 899.0,305.4" fill="#c9a514" fill-opacity="0.45"/>
<line x1="899.0" y1="305.4" x2="898.3" y2="272.4" stroke="#000" stroke-width="1.6"/>
<line x1="841.2" y1="271.2" x2="917.1" y2="232.9" stroke="#000" stroke-width="1.6"/>
<polygon points="954.1,378.9 989.5,357.5 990.6,315.1 954.3,336.0" fill="#b09e4c" fill-opacity="0.45"/>
<polygon points="1046.2,271.9 1007.6,252.9 1009.1,207.7 1048.6,226.2" fill="#2a7414" fill-opacity="0.45"/>
<line x1="841.2" y1="271.2" x2="789.4" y2="242.5" stroke="#000" stroke-width="1.6"/>
<line x1="954.3" y1="336.0" x2="881.4" y2="295.6" stroke="#000" stroke-width="1.6"/>
<line x1="935.4" y1="292.3" x2="1007.6" y2="252.9" stroke="#000" stroke-width="7" stroke-linecap="square"/>
<line x1="1027.3" y1="314.9" x2="1028.7" y2="281.8" stroke="#000" stroke-width="1.6"/>
<polygon points="974.1,313.0 1028.7,281.8 953.1,243.8 898.3,272.4" fill="#e8c21a" fill-opacity="0.45"/>
<line x1="1048.6" y1="226.2" x2="1009.1" y2="207.7" stroke="#000" stroke-width="7" stroke-linecap="square"/>
<line x1="843.0" y1="304.7" x2="841.2" y2="271.2" stroke="#000" stroke-width="1.6"/>
<line x1="1046.2" y1="271.9" x2="1048.6" y2="226.2" stroke="#000" stroke-width="7" stroke-linecap="square"/>
<line x1="954.3" y1="336.0" x2="990.6" y2="315.1" stroke="#000" stroke-width="1.6"/>
<line x1="973.5" y1="346.7" x2="899.0" y2="305.4" stroke="#000" stroke-width="1.6"/>
<line x1="954.1" y1="378.9" x2="954.3" y2="336.0" stroke="#000" stroke-width="1.6"/>
<polygon points="935.4,292.3 1007.6,252.9 1009.1,207.7 935.2,246.0" fill="#2a7414" fill-opacity="0.45"/>
<polygon points="974.1,313.0 1046.2,271.9 1007.6,252.9 935.4,292.3" fill="#2a7414" fill-opacity="0.45"/>
<line x1="973.5" y1="346.7" x2="1027.3" y2="314.9" stroke="#000" stroke-width="1.6"/>
<polygon points="973.5,346.7 899.0,305.4 898.3,272.4 974.1,313.0" fill="#a39552" fill-opacity="0.45"/>
<polygon points="973.5,346.7 1027.3,314.9 1028.7,281.8 974.1,313.0" fill="#b09e4c" fill-opacity="0.45"/>
<line x1="935.2" y1="246.0" x2="1009.1" y2="207.7" stroke="#000" stroke-width="7" stroke-linecap="square"/>
<line x1="974.1" y1="313.0" x2="1046.2" y2="271.9" stroke="#000" stroke-width="7" stroke-linecap="square"/>
<line x1="974.1" y1="313.0" x2="898.3" y2="272.4" stroke="#000" stroke-width="1.6"/>
<line x1="974.1" y1="313.0" x2="1028.7" y2="281.8" stroke="#000" stroke-width="1.6"/>
<polygon points="974.8,266.2 1048.6,226.2 1009.1,207.7 935.2,246.0" fill="#2a7414" fill-opacity="0.45"/>
<polygon points="974.1,313.0 1046.2,271.9 1048.6,226.2 974.8,266.2" fill="#2a7414" fill-opacity="0.45"/>
<line x1="935.4" y1="292.3" x2="935.2" y2="246.0" stroke="#000" stroke-width="7" stroke-linecap="square"/>
<line x1="974.1" y1="313.0" x2="935.4" y2="292.3" stroke="#000" stroke-width="7" stroke-linecap="square"/>
<line x1="973.5" y1="346.7" x2="974.1" y2="313.0" stroke="#000" stroke-width="1.6"/>
<line x1="974.8" y1="266.2" x2="1048.6" y2="226.2" stroke="#000" stroke-width="7" stroke-linecap="square"/>
<polygon points="974.1,313.0 935.4,292.3 935.2,246.0 974.8,266.2" fill="#2a7414" fill-opacity="0.45"/>
<line x1="974.8" y1="266.2" x2="935.2" y2="246.0" stroke="#000" stroke-width="7" stroke-linecap="square"/>
<line x1="974.1" y1="313.0" x2="974.8" y2="266.2" stroke="#000" stroke-width="7" stroke-linecap="square"/>
<line x1="936.4" y1="540.7" x2="936.4" y2="525.9" stroke="#0000c8" stroke-width="2.2"/>
<line x1="936.4" y1="540.7" x2="952.1" y2="529.9" stroke="#e01010" stroke-width="2.2"/>
<line x1="936.4" y1="540.7" x2="920.7" y2="530.1" stroke="#108010" stroke-width="2.2"/>
<rect x="933.9" y="538.2" width="5" height="5" fill="#f4f4f4"/>
</svg>
<div class="a" style="left:1523px;top:43px;font-size:15px;font-weight:bold;white-space:nowrap">125 cm</div>
<div class="a" style="left:1544px;top:619px;font-size:14.5px;font-weight:bold">0</div>
<svg class="a" style="left:0;top:0" width="1580" height="959"><path d="M1524 72.5h3.5M1550 72.5h3.5M1524 77.5h3.5M1550 77.5h3.5M1524 81.5h3.5M1550 81.5h3.5M1524 85.5h3.5M1550 85.5h3.5M1524 90.5h3.5M1550 90.5h3.5M1524 94.5h3.5M1550 94.5h3.5M1524 98.5h3.5M1550 98.5h3.5M1524 102.5h3.5M1550 102.5h3.5M1524 107.5h3.5M1550 107.5h3.5M1524 111.5h3.5M1550 111.5h3.5M1524 115.5h3.5M1550 115.5h3.5M1524 119.5h3.5M1550 119.5h3.5M1524 124.5h3.5M1550 124.5h3.5M1524 128.5h3.5M1550 128.5h3.5M1524 132.5h3.5M1550 132.5h3.5M1524 137.5h3.5M1550 137.5h3.5M1524 141.5h3.5M1550 141.5h3.5M1524 145.5h3.5M1550 145.5h3.5M1524 149.5h3.5M1550 149.5h3.5M1524 154.5h3.5M1550 154.5h3.5M1524 158.5h3.5M1550 158.5h3.5M1524 162.5h3.5M1550 162.5h3.5M1524 166.5h3.5M1550 166.5h3.5M1524 171.5h3.5M1550 171.5h3.5M1524 175.5h3.5M1550 175.5h3.5M1524 179.5h3.5M1550 179.5h3.5M1524 184.5h3.5M1550 184.5h3.5M1524 188.5h3.5M1550 188.5h3.5M1524 192.5h3.5M1550 192.5h3.5M1524 196.5h3.5M1550 196.5h3.5M1524 201.5h3.5M1550 201.5h3.5M1524 205.5h3.5M1550 205.5h3.5M1524 209.5h3.5M1550 209.5h3.5M1524 213.5h3.5M1550 213.5h3.5M1524 218.5h3.5M1550 218.5h3.5M1524 222.5h3.5M1550 222.5h3.5M1524 226.5h3.5M1550 226.5h3.5M1524 231.5h3.5M1550 231.5h3.5M1524 235.5h3.5M1550 235.5h3.5M1524 239.5h3.5M1550 239.5h3.5M1524 243.5h3.5M1550 243.5h3.5M1524 248.5h3.5M1550 248.5h3.5M1524 252.5h3.5M1550 252.5h3.5M1524 256.5h3.5M1550 256.5h3.5M1524 260.5h3.5M1550 260.5h3.5M1524 265.5h3.5M1550 265.5h3.5M1524 269.5h3.5M1550 269.5h3.5M1524 273.5h3.5M1550 273.5h3.5M1524 278.5h3.5M1550 278.5h3.5M1524 282.5h3.5M1550 282.5h3.5M1524 286.5h3.5M1550 286.5h3.5M1524 290.5h3.5M1550 290.5h3.5M1524 295.5h3.5M1550 295.5h3.5M1524 299.5h3.5M1550 299.5h3.5M1524 303.5h3.5M1550 303.5h3.5M1524 307.5h3.5M1550 307.5h3.5M1524 312.5h3.5M1550 312.5h3.5M1524 316.5h3.5M1550 316.5h3.5M1524 320.5h3.5M1550 320.5h3.5M1524 325.5h3.5M1550 325.5h3.5M1524 329.5h3.5M1550 329.5h3.5M1524 333.5h3.5M1550 333.5h3.5M1524 337.5h3.5M1550 337.5h3.5M1524 342.5h3.5M1550 342.5h3.5M1524 346.5h3.5M1550 346.5h3.5M1524 350.5h3.5M1550 350.5h3.5M1524 354.5h3.5M1550 354.5h3.5M1524 359.5h3.5M1550 359.5h3.5M1524 363.5h3.5M1550 363.5h3.5M1524 367.5h3.5M1550 367.5h3.5M1524 372.5h3.5M1550 372.5h3.5M1524 376.5h3.5M1550 376.5h3.5M1524 380.5h3.5M1550 380.5h3.5M1524 384.5h3.5M1550 384.5h3.5M1524 389.5h3.5M1550 389.5h3.5M1524 393.5h3.5M1550 393.5h3.5M1524 397.5h3.5M1550 397.5h3.5M1524 401.5h3.5M1550 401.5h3.5M1524 406.5h3.5M1550 406.5h3.5M1524 410.5h3.5M1550 410.5h3.5M1524 414.5h3.5M1550 414.5h3.5M1524 419.5h3.5M1550 419.5h3.5M1524 423.5h3.5M1550 423.5h3.5M1524 427.5h3.5M1550 427.5h3.5M1524 431.5h3.5M1550 431.5h3.5M1524 436.5h3.5M1550 436.5h3.5M1524 440.5h3.5M1550 440.5h3.5M1524 444.5h3.5M1550 444.5h3.5M1524 448.5h3.5M1550 448.5h3.5M1524 453.5h3.5M1550 453.5h3.5M1524 457.5h3.5M1550 457.5h3.5M1524 461.5h3.5M1550 461.5h3.5M1524 466.5h3.5M1550 466.5h3.5M1524 470.5h3.5M1550 470.5h3.5M1524 474.5h3.5M1550 474.5h3.5M1524 478.5h3.5M1550 478.5h3.5M1524 483.5h3.5M1550 483.5h3.5M1524 487.5h3.5M1550 487.5h3.5M1524 491.5h3.5M1550 491.5h3.5M1524 495.5h3.5M1550 495.5h3.5M1524 500.5h3.5M1550 500.5h3.5M1524 504.5h3.5M1550 504.5h3.5M1524 508.5h3.5M1550 508.5h3.5M1524 513.5h3.5M1550 513.5h3.5M1524 517.5h3.5M1550 517.5h3.5M1524 521.5h3.5M1550 521.5h3.5M1524 525.5h3.5M1550 525.5h3.5M1524 530.5h3.5M1550 530.5h3.5M1524 534.5h3.5M1550 534.5h3.5M1524 538.5h3.5M1550 538.5h3.5M1524 542.5h3.5M1550 542.5h3.5M1524 547.5h3.5M1550 547.5h3.5M1524 551.5h3.5M1550 551.5h3.5M1524 555.5h3.5M1550 555.5h3.5M1524 560.5h3.5M1550 560.5h3.5M1524 564.5h3.5M1550 564.5h3.5M1524 568.5h3.5M1550 568.5h3.5M1524 572.5h3.5M1550 572.5h3.5M1524 577.5h3.5M1550 577.5h3.5M1524 581.5h3.5M1550 581.5h3.5M1524 585.5h3.5M1550 585.5h3.5M1524 589.5h3.5M1550 589.5h3.5M1524 594.5h3.5M1550 594.5h3.5M1524 598.5h3.5M1550 598.5h3.5M1524 602.5h3.5M1550 602.5h3.5M1524 606.5h3.5M1550 606.5h3.5" stroke="#d0d0d0" stroke-width="1"/><rect x="1537.5" y="72" width="3.5" height="534.5" fill="#e7e7e7" stroke="#d6d6d6" stroke-width="1"/><rect x="1530.5" y="67.5" width="17" height="10" fill="#ececec" stroke="#acacac" stroke-width="1"/></svg>
<div class="a" style="left:1535px;top:332px;font-size:15px;font-weight:bold;white-space:nowrap">125 cm</div>
<svg class="a" style="left:0;top:0" width="1580" height="959"><ellipse cx="1469" cy="617.8" rx="33" ry="19.2" fill="none" stroke="#bcbcbc" stroke-width="8.5"/><polygon points="1446.3,585.0 1468.8,575.6 1491.6,585.0 1468.8,597.2" fill="#7f7ffa"/><polygon points="1446.3,585.0 1468.8,597.2 1468.8,623.8 1449.1,609.6" fill="#fb7f7f"/><polygon points="1468.8,597.2 1491.6,585.0 1488.8,610.7 1468.8,623.8" fill="#7fbf7f"/><g transform="matrix(0.2250,-0.0940,0.2250,0.1220,1446.3,585.0)"><text x="60" y="82" font-size="62" stroke="#fff" stroke-width="5" font-family="Liberation Sans" font-weight="bold" fill="#fff" text-anchor="middle">U</text></g><g transform="matrix(0.2250,0.1220,0.0280,0.2460,1446.3,585.0)"><text x="42" y="99" font-size="58" stroke="#fff" stroke-width="4" font-family="Liberation Sans" font-weight="bold" fill="#fff" text-anchor="middle">B</text></g><g transform="matrix(0.2280,-0.1220,0.0000,0.2660,1468.8,597.2)"><text x="49" y="90" font-size="58" stroke="#fff" stroke-width="4" font-family="Liberation Sans" font-weight="bold" fill="#fff" text-anchor="middle">R</text></g></svg>

<!-- splitter / bottom tabs -->
<div class="a" style="left:0;top:650px;width:1580px;height:29px;background:#f0f0f0;border-top:1px solid #acacac;border-bottom:1px solid #acacac"></div>
<div class="tab" style="left:0;top:658px;width:31px;height:21px;font-size:12px;line-height:20px;font-weight:normal">Log</div>
<div class="tab tsel" style="left:30px;top:656px;width:38px;height:23px;font-size:12px;line-height:23px;font-weight:normal">Graf</div>

<div class="a" style="left:6px;top:686px;width:390px;height:257px;border:1px solid #d0d0d0"></div>
<svg class="a" style="left:0;top:0" width="1580" height="959">
<path d="M454.5 732.5V893.5M480.5 732.5V893.5M505.5 732.5V893.5M530.5 732.5V893.5M555.5 732.5V893.5M580.5 732.5V893.5M605.5 732.5V893.5M631.5 732.5V893.5M656.5 732.5V893.5M681.5 732.5V893.5M706.5 732.5V893.5M731.5 732.5V893.5M756.5 732.5V893.5M782.5 732.5V893.5M807.5 732.5V893.5M832.5 732.5V893.5M857.5 732.5V893.5M882.5 732.5V893.5M907.5 732.5V893.5M933.5 732.5V893.5M958.5 732.5V893.5M983.5 732.5V893.5M1008.5 732.5V893.5M1033.5 732.5V893.5M1058.5 732.5V893.5M1083.5 732.5V893.5M1109.5 732.5V893.5M1134.5 732.5V893.5M1159.5 732.5V893.5M1184.5 732.5V893.5M1209.5 732.5V893.5M1234.5 732.5V893.5M1260.5 732.5V893.5M1285.5 732.5V893.5M1310.5 732.5V893.5M1335.5 732.5V893.5M1360.5 732.5V893.5M1385.5 732.5V893.5M1411.5 732.5V893.5M1436.5 732.5V893.5M1461.5 732.5V893.5M1486.5 732.5V893.5M1511.5 732.5V893.5M1536.5 732.5V893.5M1562.5 732.5V893.5M454.5 889.5H1561.5M454.5 860.5H1561.5M454.5 830.5H1561.5M454.5 801.5H1561.5M454.5 771.5H1561.5M454.5 742.5H1561.5" stroke="#e6e6e6" stroke-width="1" fill="none"/>
<path d="M454.5 893.5v4M460.5 893.5v2.5M465.5 893.5v2.5M470.5 893.5v2.5M475.5 893.5v2.5M480.5 893.5v4M485.5 893.5v2.5M490.5 893.5v2.5M495.5 893.5v2.5M500.5 893.5v2.5M505.5 893.5v4M510.5 893.5v2.5M515.5 893.5v2.5M520.5 893.5v2.5M525.5 893.5v2.5M530.5 893.5v4M535.5 893.5v2.5M540.5 893.5v2.5M545.5 893.5v2.5M550.5 893.5v2.5M555.5 893.5v4M560.5 893.5v2.5M565.5 893.5v2.5M570.5 893.5v2.5M575.5 893.5v2.5M580.5 893.5v4M585.5 893.5v2.5M590.5 893.5v2.5M595.5 893.5v2.5M600.5 893.5v2.5M605.5 893.5v4M610.5 893.5v2.5M616.5 893.5v2.5M621.5 893.5v2.5M626.5 893.5v2.5M631.5 893.5v4M636.5 893.5v2.5M641.5 893.5v2.5M646.5 893.5v2.5M651.5 893.5v2.5M656.5 893.5v4M661.5 893.5v2.5M666.5 893.5v2.5M671.5 893.5v2.5M676.5 893.5v2.5M681.5 893.5v4M686.5 893.5v2.5M691.5 893.5v2.5M696.5 893.5v2.5M701.5 893.5v2.5M706.5 893.5v4M711.5 893.5v2.5M716.5 893.5v2.5M721.5 893.5v2.5M726.5 893.5v2.5M731.5 893.5v4M736.5 893.5v2.5M741.5 893.5v2.5M746.5 893.5v2.5M751.5 893.5v2.5M756.5 893.5v4M761.5 893.5v2.5M766.5 893.5v2.5M772.5 893.5v2.5M777.5 893.5v2.5M782.5 893.5v4M787.5 893.5v2.5M792.5 893.5v2.5M797.5 893.5v2.5M802.5 893.5v2.5M807.5 893.5v4M812.5 893.5v2.5M817.5 893.5v2.5M822.5 893.5v2.5M827.5 893.5v2.5M832.5 893.5v4M837.5 893.5v2.5M842.5 893.5v2.5M847.5 893.5v2.5M852.5 893.5v2.5M857.5 893.5v4M862.5 893.5v2.5M867.5 893.5v2.5M872.5 893.5v2.5M877.5 893.5v2.5M882.5 893.5v4M887.5 893.5v2.5M892.5 893.5v2.5M897.5 893.5v2.5M902.5 893.5v2.5M907.5 893.5v4M912.5 893.5v2.5M917.5 893.5v2.5M922.5 893.5v2.5M927.5 893.5v2.5M933.5 893.5v4M938.5 893.5v2.5M943.5 893.5v2.5M948.5 893.5v2.5M953.5 893.5v2.5M958.5 893.5v4M963.5 893.5v2.5M968.5 893.5v2.5M973.5 893.5v2.5M978.5 893.5v2.5M983.5 893.5v4M988.5 893.5v2.5M993.5 893.5v2.5M998.5 893.5v2.5M1003.5 893.5v2.5M1008.5 893.5v4M1013.5 893.5v2.5M1018.5 893.5v2.5M1023.5 893.5v2.5M1028.5 893.5v2.5M1033.5 893.5v4M1038.5 893.5v2.5M1043.5 893.5v2.5M1048.5 893.5v2.5M1053.5 893.5v2.5M1058.5 893.5v4M1063.5 893.5v2.5M1068.5 893.5v2.5M1073.5 893.5v2.5M1078.5 893.5v2.5M1083.5 893.5v4M1089.5 893.5v2.5M1094.5 893.5v2.5M1099.5 893.5v2.5M1104.5 893.5v2.5M1109.5 893.5v4M1114.5 893.5v2.5M1119.5 893.5v2.5M1124.5 893.5v2.5M1129.5 893.5v2.5M1134.5 893.5v4M1139.5 893.5v2.5M1144.5 893.5v2.5M1149.5 893.5v2.5M1154.5 893.5v2.5M1159.5 893.5v4M1164.5 893.5v2.5M1169.5 893.5v2.5M1174.5 893.5v2.5M1179.5 893.5v2.5M1184.5 893.5v4M1189.5 893.5v2.5M1194.5 893.5v2.5M1199.5 893.5v2.5M1204.5 893.5v2.5M1209.5 893.5v4M1214.5 893.5v2.5M1219.5 893.5v2.5M1224.5 893.5v2.5M1229.5 893.5v2.5M1234.5 893.5v4M1239.5 893.5v2.5M1244.5 893.5v2.5M1250.5 893.5v2.5M1255.5 893.5v2.5M1260.5 893.5v4M1265.5 893.5v2.5M1270.5 893.5v2.5M1275.5 893.5v2.5M1280.5 893.5v2.5M1285.5 893.5v4M1290.5 893.5v2.5M1295.5 893.5v2.5M1300.5 893.5v2.5M1305.5 893.5v2.5M1310.5 893.5v4M1315.5 893.5v2.5M1320.5 893.5v2.5M1325.5 893.5v2.5M1330.5 893.5v2.5M1335.5 893.5v4M1340.5 893.5v2.5M1345.5 893.5v2.5M1350.5 893.5v2.5M1355.5 893.5v2.5M1360.5 893.5v4M1365.5 893.5v2.5M1370.5 893.5v2.5M1375.5 893.5v2.5M1380.5 893.5v2.5M1385.5 893.5v4M1390.5 893.5v2.5M1395.5 893.5v2.5M1400.5 893.5v2.5M1406.5 893.5v2.5M1411.5 893.5v4M1416.5 893.5v2.5M1421.5 893.5v2.5M1426.5 893.5v2.5M1431.5 893.5v2.5M1436.5 893.5v4M1441.5 893.5v2.5M1446.5 893.5v2.5M1451.5 893.5v2.5M1456.5 893.5v2.5M1461.5 893.5v4M1466.5 893.5v2.5M1471.5 893.5v2.5M1476.5 893.5v2.5M1481.5 893.5v2.5M1486.5 893.5v4M1491.5 893.5v2.5M1496.5 893.5v2.5M1501.5 893.5v2.5M1506.5 893.5v2.5M1511.5 893.5v4M1516.5 893.5v2.5M1521.5 893.5v2.5M1526.5 893.5v2.5M1531.5 893.5v2.5M1536.5 893.5v4M1541.5 893.5v2.5M1546.5 893.5v2.5M1551.5 893.5v2.5M1556.5 893.5v2.5M1562.5 893.5v4M454.5 889.5h-4M454.5 884.5h-2.5M454.5 878.5h-2.5M454.5 872.5h-2.5M454.5 866.5h-2.5M454.5 860.5h-4M454.5 854.5h-2.5M454.5 848.5h-2.5M454.5 842.5h-2.5M454.5 836.5h-2.5M454.5 830.5h-4M454.5 825.5h-2.5M454.5 819.5h-2.5M454.5 813.5h-2.5M454.5 807.5h-2.5M454.5 801.5h-4M454.5 795.5h-2.5M454.5 789.5h-2.5M454.5 783.5h-2.5M454.5 777.5h-2.5M454.5 771.5h-4M454.5 766.5h-2.5M454.5 760.5h-2.5M454.5 754.5h-2.5M454.5 748.5h-2.5M454.5 742.5h-4M454.5 736.5h-2.5" stroke="#000" stroke-width="1" fill="none"/>
<rect x="454.5" y="732.5" width="1107.0" height="161.0" fill="none" stroke="#000" stroke-width="1"/>
<polyline points="504.8,883.5 756.4,865.8 1008.0,836.3 1259.6,795.1 1511.2,742.0" fill="none" stroke="#2677b8" stroke-width="1.2"/>
<circle cx="504.8" cy="883.5" r="2.6" fill="#1f6fb4"/>
<circle cx="756.4" cy="865.8" r="2.6" fill="#1f6fb4"/>
<circle cx="1008.0" cy="836.3" r="2.6" fill="#1f6fb4"/>
<circle cx="1259.6" cy="795.1" r="2.6" fill="#1f6fb4"/>
<circle cx="1511.2" cy="742.0" r="2.6" fill="#1f6fb4"/>
<g font-family="Liberation Sans" font-size="12.5" fill="#333"><text x="454.5" y="911" text-anchor="middle">0,8</text><text x="479.7" y="911" text-anchor="middle">0,9</text><text x="504.8" y="911" text-anchor="middle">1</text><text x="530.0" y="911" text-anchor="middle">1,1</text><text x="555.1" y="911" text-anchor="middle">1,2</text><text x="580.3" y="911" text-anchor="middle">1,3</text><text x="605.5" y="911" text-anchor="middle">1,4</text><text x="630.6" y="911" text-anchor="middle">1,5</text><text x="655.8" y="911" text-anchor="middle">1,6</text><text x="680.9" y="911" text-anchor="middle">1,7</text><text x="706.1" y="911" text-anchor="middle">1,8</text><text x="731.2" y="911" text-anchor="middle">1,9</text><text x="756.4" y="911" text-anchor="middle">2</text><text x="781.6" y="911" text-anchor="middle">2,1</text><text x="806.7" y="911" text-anchor="middle">2,2</text><text x="831.9" y="911" text-anchor="middle">2,3</text><text x="857.0" y="911" text-anchor="middle">2,4</text><text x="882.2" y="911" text-anchor="middle">2,5</text><text x="907.4" y="911" text-anchor="middle">2,6</text><text x="932.5" y="911" text-anchor="middle">2,7</text><text x="957.7" y="911" text-anchor="middle">2,8</text><text x="982.8" y="911" text-anchor="middle">2,9</text><text x="1008.0" y="911" text-anchor="middle">3</text><text x="1033.2" y="911" text-anchor="middle">3,1</text><text x="1058.3" y="911" text-anchor="middle">3,2</text><text x="1083.5" y="911" text-anchor="middle">3,3</text><text x="1108.6" y="911" text-anchor="middle">3,4</text><text x="1133.8" y="911" text-anchor="middle">3,5</text><text x="1159.0" y="911" text-anchor="middle">3,6</text><text x="1184.1" y="911" text-anchor="middle">3,7</text><text x="1209.3" y="911" text-anchor="middle">3,8</text><text x="1234.4" y="911" text-anchor="middle">3,9</text><text x="1259.6" y="911" text-anchor="middle">4</text><text x="1284.8" y="911" text-anchor="middle">4,1</text><text x="1309.9" y="911" text-anchor="middle">4,2</text><text x="1335.1" y="911" text-anchor="middle">4,3</text><text x="1360.2" y="911" text-anchor="middle">4,4</text><text x="1385.4" y="911" text-anchor="middle">4,5</text><text x="1410.5" y="911" text-anchor="middle">4,6</text><text x="1435.7" y="911" text-anchor="middle">4,7</text><text x="1460.9" y="911" text-anchor="middle">4,8</text><text x="1486.0" y="911" text-anchor="middle">4,9</text><text x="1511.2" y="911" text-anchor="middle">5</text><text x="1536.3" y="911" text-anchor="middle">5,1</text><text x="1561.5" y="911" text-anchor="middle">5,2</text><text x="446" y="893.9" text-anchor="end">0</text><text x="446" y="864.4" text-anchor="end">5</text><text x="446" y="834.9" text-anchor="end">10</text><text x="446" y="805.5" text-anchor="end">15</text><text x="446" y="776.0" text-anchor="end">20</text><text x="446" y="746.5" text-anchor="end">25</text></g>
<text x="1008" y="710" text-anchor="middle" font-family="Liberation Sans" font-weight="bold" font-size="15.7" fill="#000">Průběh optimalizace</text>
<text x="1008" y="934" text-anchor="middle" font-family="Liberation Sans" font-weight="bold" font-size="14.5" fill="#000">Čas</text>
<text transform="translate(425 813) rotate(-90)" text-anchor="middle" font-family="Liberation Sans" font-weight="bold" font-size="16" fill="#000">Hodnota kombinace</text>
</svg>

<!-- bottom status -->
<div class="a" style="left:0;top:949.5px;width:1580px;height:10px;background:#dfdfdf;border-top:2px solid #a4a4a4"></div>
</body></html>
